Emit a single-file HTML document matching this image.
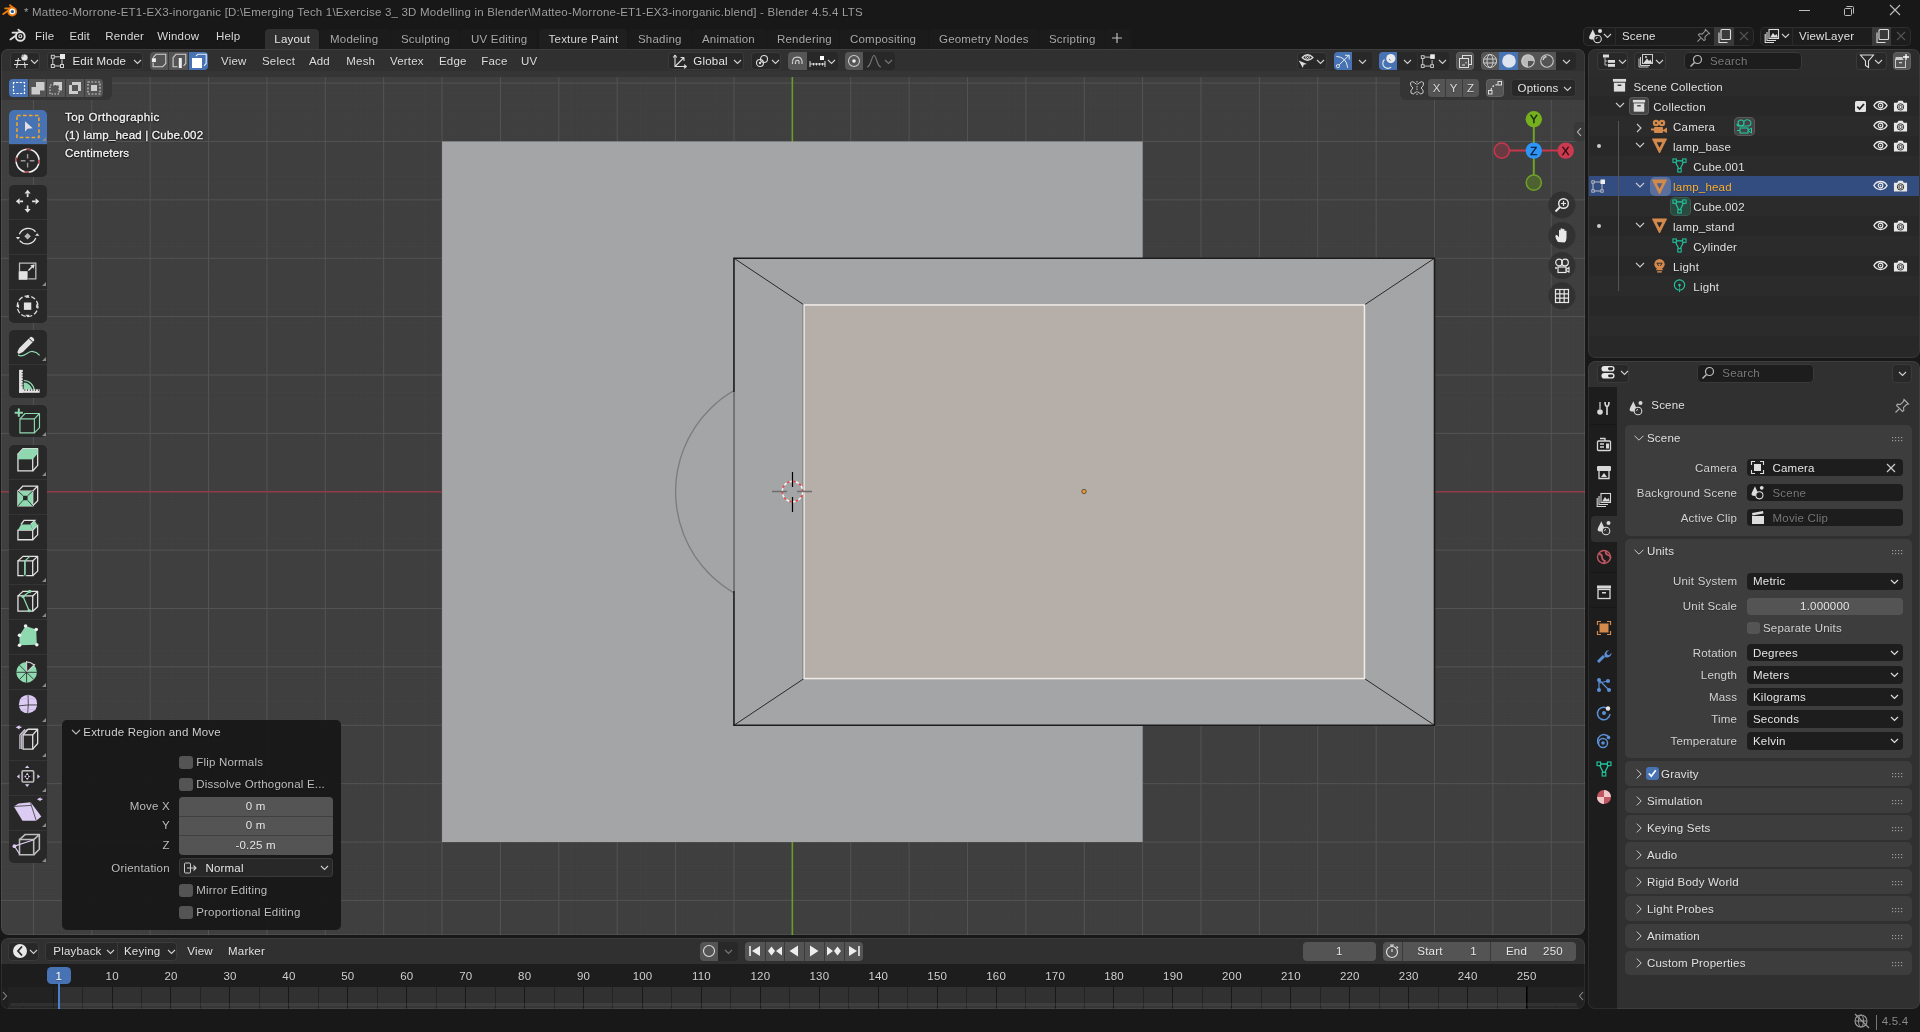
<!DOCTYPE html><html><head><meta charset="utf-8"><style>
html,body{margin:0;padding:0;width:1920px;height:1032px;overflow:hidden;background:#181818}
body{position:relative;font-family:"Liberation Sans",sans-serif}
div,span,svg{position:absolute;box-sizing:border-box}
svg{overflow:visible}
.t{white-space:pre;text-shadow:0 1px 1px rgba(0,0,0,0.28)}
#root{left:0;top:0;width:1920px;height:1032px;will-change:transform}
</style></head><body><div id="root">
<span class="t" style="left:24px;top:7px;font-size:11.5px;line-height:11.5px;color:#9e9e9e;letter-spacing:0.2px;">* Matteo-Morrone-ET1-EX3-inorganic [D:\Emerging Tech 1\Exercise 3_ 3D Modelling in Blender\Matteo-Morrone-ET1-EX3-inorganic.blend] - Blender 4.5.4 LTS</span>
<svg style="left:1799px;top:10px;" width="11" height="2" viewBox="0 0 11 2"><rect width="11" height="1" fill="#bdbdbd"/></svg>
<svg style="left:1843px;top:5px;" width="12" height="12" viewBox="0 0 12 12"><rect x="1.5" y="3.5" width="7" height="7" rx="1" fill="none" stroke="#bdbdbd"/><path d="M3.5 1.5h6a1 1 0 0 1 1 1v6" fill="none" stroke="#bdbdbd"/></svg>
<svg style="left:1889px;top:4px;" width="12" height="12" viewBox="0 0 12 12"><path d="M1 1L11 11M11 1L1 11" stroke="#bdbdbd" stroke-width="1.1"/></svg>
<span class="t" style="left:35px;top:31px;font-size:11.5px;line-height:11.5px;color:#d8d8d8;letter-spacing:0.2px;">File</span>
<span class="t" style="left:69.4px;top:31px;font-size:11.5px;line-height:11.5px;color:#d8d8d8;letter-spacing:0.2px;">Edit</span>
<span class="t" style="left:105.2px;top:31px;font-size:11.5px;line-height:11.5px;color:#d8d8d8;letter-spacing:0.2px;">Render</span>
<span class="t" style="left:157.2px;top:31px;font-size:11.5px;line-height:11.5px;color:#d8d8d8;letter-spacing:0.2px;">Window</span>
<span class="t" style="left:216px;top:31px;font-size:11.5px;line-height:11.5px;color:#d8d8d8;letter-spacing:0.2px;">Help</span>
<div style="left:265px;top:28.5px;width:54px;height:20px;background:#303030;border-radius:4px 4px 0 0;"></div>
<span class="t" style="left:274.3px;top:34px;font-size:11.5px;line-height:11.5px;color:#e6e6e6;letter-spacing:0.2px;">Layout</span>
<div style="left:320px;top:28.5px;width:70px;height:20px;background:#1b1b1b;border-radius:4px 4px 0 0;"></div>
<span class="t" style="left:330px;top:34px;font-size:11.5px;line-height:11.5px;color:#a8a8a8;letter-spacing:0.2px;">Modeling</span>
<div style="left:391px;top:28.5px;width:69px;height:20px;background:#1b1b1b;border-radius:4px 4px 0 0;"></div>
<span class="t" style="left:401px;top:34px;font-size:11.5px;line-height:11.5px;color:#a8a8a8;letter-spacing:0.2px;">Sculpting</span>
<div style="left:461px;top:28.5px;width:76px;height:20px;background:#1b1b1b;border-radius:4px 4px 0 0;"></div>
<span class="t" style="left:471px;top:34px;font-size:11.5px;line-height:11.5px;color:#a8a8a8;letter-spacing:0.2px;">UV Editing</span>
<div style="left:538.6px;top:28.5px;width:88.39999999999998px;height:20px;background:#1f1f1f;border-radius:4px 4px 0 0;"></div>
<span class="t" style="left:548.6px;top:34px;font-size:11.5px;line-height:11.5px;color:#d6d6d6;letter-spacing:0.2px;">Texture Paint</span>
<div style="left:628px;top:28.5px;width:63px;height:20px;background:#1b1b1b;border-radius:4px 4px 0 0;"></div>
<span class="t" style="left:638px;top:34px;font-size:11.5px;line-height:11.5px;color:#a8a8a8;letter-spacing:0.2px;">Shading</span>
<div style="left:692px;top:28.5px;width:74px;height:20px;background:#1b1b1b;border-radius:4px 4px 0 0;"></div>
<span class="t" style="left:702px;top:34px;font-size:11.5px;line-height:11.5px;color:#a8a8a8;letter-spacing:0.2px;">Animation</span>
<div style="left:767px;top:28.5px;width:72px;height:20px;background:#1b1b1b;border-radius:4px 4px 0 0;"></div>
<span class="t" style="left:777px;top:34px;font-size:11.5px;line-height:11.5px;color:#a8a8a8;letter-spacing:0.2px;">Rendering</span>
<div style="left:840px;top:28.5px;width:88px;height:20px;background:#1b1b1b;border-radius:4px 4px 0 0;"></div>
<span class="t" style="left:850px;top:34px;font-size:11.5px;line-height:11.5px;color:#a8a8a8;letter-spacing:0.2px;">Compositing</span>
<div style="left:929px;top:28.5px;width:109px;height:20px;background:#1b1b1b;border-radius:4px 4px 0 0;"></div>
<span class="t" style="left:939px;top:34px;font-size:11.5px;line-height:11.5px;color:#a8a8a8;letter-spacing:0.2px;">Geometry Nodes</span>
<div style="left:1039px;top:28.5px;width:66px;height:20px;background:#1b1b1b;border-radius:4px 4px 0 0;"></div>
<span class="t" style="left:1049px;top:34px;font-size:11.5px;line-height:11.5px;color:#a8a8a8;letter-spacing:0.2px;">Scripting</span>
<div style="left:1106px;top:28.5px;width:25px;height:20px;background:#1b1b1b;border-radius:4px 4px 0 0;"></div>
<svg style="left:1112px;top:33px;" width="10" height="10" viewBox="0 0 10 10"><path d="M5 0V10M0 5H10" stroke="#bdbdbd" stroke-width="1.2"/></svg>
<div style="left:1px;top:49px;width:1584px;height:886px;background:#3f3f3f;border-radius:8px;"></div>
<svg style="left:0;top:0" width="1920" height="1032"><clipPath id="vpc"><rect x="1" y="49" width="1584" height="886" rx="8"/></clipPath><g clip-path="url(#vpc)"><rect x="3.71" y="49" width="1" height="886" fill="#444444" fill-opacity="0.3"/><rect x="9.55" y="49" width="1" height="886" fill="#444444" fill-opacity="0.3"/><rect x="15.39" y="49" width="1" height="886" fill="#444444" fill-opacity="0.3"/><rect x="21.22" y="49" width="1" height="886" fill="#444444" fill-opacity="0.3"/><rect x="27.06" y="49" width="1" height="886" fill="#444444" fill-opacity="0.3"/><rect x="38.74" y="49" width="1" height="886" fill="#444444" fill-opacity="0.3"/><rect x="44.58" y="49" width="1" height="886" fill="#444444" fill-opacity="0.3"/><rect x="50.41" y="49" width="1" height="886" fill="#444444" fill-opacity="0.3"/><rect x="56.25" y="49" width="1" height="886" fill="#444444" fill-opacity="0.3"/><rect x="62.09" y="49" width="1" height="886" fill="#444444" fill-opacity="0.3"/><rect x="67.93" y="49" width="1" height="886" fill="#444444" fill-opacity="0.3"/><rect x="73.77" y="49" width="1" height="886" fill="#444444" fill-opacity="0.3"/><rect x="79.60" y="49" width="1" height="886" fill="#444444" fill-opacity="0.3"/><rect x="85.44" y="49" width="1" height="886" fill="#444444" fill-opacity="0.3"/><rect x="97.12" y="49" width="1" height="886" fill="#444444" fill-opacity="0.3"/><rect x="102.96" y="49" width="1" height="886" fill="#444444" fill-opacity="0.3"/><rect x="108.79" y="49" width="1" height="886" fill="#444444" fill-opacity="0.3"/><rect x="114.63" y="49" width="1" height="886" fill="#444444" fill-opacity="0.3"/><rect x="120.47" y="49" width="1" height="886" fill="#444444" fill-opacity="0.3"/><rect x="126.31" y="49" width="1" height="886" fill="#444444" fill-opacity="0.3"/><rect x="132.15" y="49" width="1" height="886" fill="#444444" fill-opacity="0.3"/><rect x="137.98" y="49" width="1" height="886" fill="#444444" fill-opacity="0.3"/><rect x="143.82" y="49" width="1" height="886" fill="#444444" fill-opacity="0.3"/><rect x="155.50" y="49" width="1" height="886" fill="#444444" fill-opacity="0.3"/><rect x="161.34" y="49" width="1" height="886" fill="#444444" fill-opacity="0.3"/><rect x="167.17" y="49" width="1" height="886" fill="#444444" fill-opacity="0.3"/><rect x="173.01" y="49" width="1" height="886" fill="#444444" fill-opacity="0.3"/><rect x="178.85" y="49" width="1" height="886" fill="#444444" fill-opacity="0.3"/><rect x="184.69" y="49" width="1" height="886" fill="#444444" fill-opacity="0.3"/><rect x="190.53" y="49" width="1" height="886" fill="#444444" fill-opacity="0.3"/><rect x="196.36" y="49" width="1" height="886" fill="#444444" fill-opacity="0.3"/><rect x="202.20" y="49" width="1" height="886" fill="#444444" fill-opacity="0.3"/><rect x="213.88" y="49" width="1" height="886" fill="#444444" fill-opacity="0.3"/><rect x="219.72" y="49" width="1" height="886" fill="#444444" fill-opacity="0.3"/><rect x="225.55" y="49" width="1" height="886" fill="#444444" fill-opacity="0.3"/><rect x="231.39" y="49" width="1" height="886" fill="#444444" fill-opacity="0.3"/><rect x="237.23" y="49" width="1" height="886" fill="#444444" fill-opacity="0.3"/><rect x="243.07" y="49" width="1" height="886" fill="#444444" fill-opacity="0.3"/><rect x="248.91" y="49" width="1" height="886" fill="#444444" fill-opacity="0.3"/><rect x="254.74" y="49" width="1" height="886" fill="#444444" fill-opacity="0.3"/><rect x="260.58" y="49" width="1" height="886" fill="#444444" fill-opacity="0.3"/><rect x="272.26" y="49" width="1" height="886" fill="#444444" fill-opacity="0.3"/><rect x="278.10" y="49" width="1" height="886" fill="#444444" fill-opacity="0.3"/><rect x="283.93" y="49" width="1" height="886" fill="#444444" fill-opacity="0.3"/><rect x="289.77" y="49" width="1" height="886" fill="#444444" fill-opacity="0.3"/><rect x="295.61" y="49" width="1" height="886" fill="#444444" fill-opacity="0.3"/><rect x="301.45" y="49" width="1" height="886" fill="#444444" fill-opacity="0.3"/><rect x="307.29" y="49" width="1" height="886" fill="#444444" fill-opacity="0.3"/><rect x="313.12" y="49" width="1" height="886" fill="#444444" fill-opacity="0.3"/><rect x="318.96" y="49" width="1" height="886" fill="#444444" fill-opacity="0.3"/><rect x="330.64" y="49" width="1" height="886" fill="#444444" fill-opacity="0.3"/><rect x="336.48" y="49" width="1" height="886" fill="#444444" fill-opacity="0.3"/><rect x="342.31" y="49" width="1" height="886" fill="#444444" fill-opacity="0.3"/><rect x="348.15" y="49" width="1" height="886" fill="#444444" fill-opacity="0.3"/><rect x="353.99" y="49" width="1" height="886" fill="#444444" fill-opacity="0.3"/><rect x="359.83" y="49" width="1" height="886" fill="#444444" fill-opacity="0.3"/><rect x="365.67" y="49" width="1" height="886" fill="#444444" fill-opacity="0.3"/><rect x="371.50" y="49" width="1" height="886" fill="#444444" fill-opacity="0.3"/><rect x="377.34" y="49" width="1" height="886" fill="#444444" fill-opacity="0.3"/><rect x="389.02" y="49" width="1" height="886" fill="#444444" fill-opacity="0.3"/><rect x="394.86" y="49" width="1" height="886" fill="#444444" fill-opacity="0.3"/><rect x="400.69" y="49" width="1" height="886" fill="#444444" fill-opacity="0.3"/><rect x="406.53" y="49" width="1" height="886" fill="#444444" fill-opacity="0.3"/><rect x="412.37" y="49" width="1" height="886" fill="#444444" fill-opacity="0.3"/><rect x="418.21" y="49" width="1" height="886" fill="#444444" fill-opacity="0.3"/><rect x="424.05" y="49" width="1" height="886" fill="#444444" fill-opacity="0.3"/><rect x="429.88" y="49" width="1" height="886" fill="#444444" fill-opacity="0.3"/><rect x="435.72" y="49" width="1" height="886" fill="#444444" fill-opacity="0.3"/><rect x="447.40" y="49" width="1" height="886" fill="#444444" fill-opacity="0.3"/><rect x="453.24" y="49" width="1" height="886" fill="#444444" fill-opacity="0.3"/><rect x="459.07" y="49" width="1" height="886" fill="#444444" fill-opacity="0.3"/><rect x="464.91" y="49" width="1" height="886" fill="#444444" fill-opacity="0.3"/><rect x="470.75" y="49" width="1" height="886" fill="#444444" fill-opacity="0.3"/><rect x="476.59" y="49" width="1" height="886" fill="#444444" fill-opacity="0.3"/><rect x="482.43" y="49" width="1" height="886" fill="#444444" fill-opacity="0.3"/><rect x="488.26" y="49" width="1" height="886" fill="#444444" fill-opacity="0.3"/><rect x="494.10" y="49" width="1" height="886" fill="#444444" fill-opacity="0.3"/><rect x="505.78" y="49" width="1" height="886" fill="#444444" fill-opacity="0.3"/><rect x="511.62" y="49" width="1" height="886" fill="#444444" fill-opacity="0.3"/><rect x="517.45" y="49" width="1" height="886" fill="#444444" fill-opacity="0.3"/><rect x="523.29" y="49" width="1" height="886" fill="#444444" fill-opacity="0.3"/><rect x="529.13" y="49" width="1" height="886" fill="#444444" fill-opacity="0.3"/><rect x="534.97" y="49" width="1" height="886" fill="#444444" fill-opacity="0.3"/><rect x="540.81" y="49" width="1" height="886" fill="#444444" fill-opacity="0.3"/><rect x="546.64" y="49" width="1" height="886" fill="#444444" fill-opacity="0.3"/><rect x="552.48" y="49" width="1" height="886" fill="#444444" fill-opacity="0.3"/><rect x="564.16" y="49" width="1" height="886" fill="#444444" fill-opacity="0.3"/><rect x="570.00" y="49" width="1" height="886" fill="#444444" fill-opacity="0.3"/><rect x="575.83" y="49" width="1" height="886" fill="#444444" fill-opacity="0.3"/><rect x="581.67" y="49" width="1" height="886" fill="#444444" fill-opacity="0.3"/><rect x="587.51" y="49" width="1" height="886" fill="#444444" fill-opacity="0.3"/><rect x="593.35" y="49" width="1" height="886" fill="#444444" fill-opacity="0.3"/><rect x="599.19" y="49" width="1" height="886" fill="#444444" fill-opacity="0.3"/><rect x="605.02" y="49" width="1" height="886" fill="#444444" fill-opacity="0.3"/><rect x="610.86" y="49" width="1" height="886" fill="#444444" fill-opacity="0.3"/><rect x="622.54" y="49" width="1" height="886" fill="#444444" fill-opacity="0.3"/><rect x="628.38" y="49" width="1" height="886" fill="#444444" fill-opacity="0.3"/><rect x="634.21" y="49" width="1" height="886" fill="#444444" fill-opacity="0.3"/><rect x="640.05" y="49" width="1" height="886" fill="#444444" fill-opacity="0.3"/><rect x="645.89" y="49" width="1" height="886" fill="#444444" fill-opacity="0.3"/><rect x="651.73" y="49" width="1" height="886" fill="#444444" fill-opacity="0.3"/><rect x="657.57" y="49" width="1" height="886" fill="#444444" fill-opacity="0.3"/><rect x="663.40" y="49" width="1" height="886" fill="#444444" fill-opacity="0.3"/><rect x="669.24" y="49" width="1" height="886" fill="#444444" fill-opacity="0.3"/><rect x="680.92" y="49" width="1" height="886" fill="#444444" fill-opacity="0.3"/><rect x="686.76" y="49" width="1" height="886" fill="#444444" fill-opacity="0.3"/><rect x="692.59" y="49" width="1" height="886" fill="#444444" fill-opacity="0.3"/><rect x="698.43" y="49" width="1" height="886" fill="#444444" fill-opacity="0.3"/><rect x="704.27" y="49" width="1" height="886" fill="#444444" fill-opacity="0.3"/><rect x="710.11" y="49" width="1" height="886" fill="#444444" fill-opacity="0.3"/><rect x="715.95" y="49" width="1" height="886" fill="#444444" fill-opacity="0.3"/><rect x="721.78" y="49" width="1" height="886" fill="#444444" fill-opacity="0.3"/><rect x="727.62" y="49" width="1" height="886" fill="#444444" fill-opacity="0.3"/><rect x="739.30" y="49" width="1" height="886" fill="#444444" fill-opacity="0.3"/><rect x="745.14" y="49" width="1" height="886" fill="#444444" fill-opacity="0.3"/><rect x="750.97" y="49" width="1" height="886" fill="#444444" fill-opacity="0.3"/><rect x="756.81" y="49" width="1" height="886" fill="#444444" fill-opacity="0.3"/><rect x="762.65" y="49" width="1" height="886" fill="#444444" fill-opacity="0.3"/><rect x="768.49" y="49" width="1" height="886" fill="#444444" fill-opacity="0.3"/><rect x="774.33" y="49" width="1" height="886" fill="#444444" fill-opacity="0.3"/><rect x="780.16" y="49" width="1" height="886" fill="#444444" fill-opacity="0.3"/><rect x="786.00" y="49" width="1" height="886" fill="#444444" fill-opacity="0.3"/><rect x="797.68" y="49" width="1" height="886" fill="#444444" fill-opacity="0.3"/><rect x="803.52" y="49" width="1" height="886" fill="#444444" fill-opacity="0.3"/><rect x="809.35" y="49" width="1" height="886" fill="#444444" fill-opacity="0.3"/><rect x="815.19" y="49" width="1" height="886" fill="#444444" fill-opacity="0.3"/><rect x="821.03" y="49" width="1" height="886" fill="#444444" fill-opacity="0.3"/><rect x="826.87" y="49" width="1" height="886" fill="#444444" fill-opacity="0.3"/><rect x="832.71" y="49" width="1" height="886" fill="#444444" fill-opacity="0.3"/><rect x="838.54" y="49" width="1" height="886" fill="#444444" fill-opacity="0.3"/><rect x="844.38" y="49" width="1" height="886" fill="#444444" fill-opacity="0.3"/><rect x="856.06" y="49" width="1" height="886" fill="#444444" fill-opacity="0.3"/><rect x="861.90" y="49" width="1" height="886" fill="#444444" fill-opacity="0.3"/><rect x="867.73" y="49" width="1" height="886" fill="#444444" fill-opacity="0.3"/><rect x="873.57" y="49" width="1" height="886" fill="#444444" fill-opacity="0.3"/><rect x="879.41" y="49" width="1" height="886" fill="#444444" fill-opacity="0.3"/><rect x="885.25" y="49" width="1" height="886" fill="#444444" fill-opacity="0.3"/><rect x="891.09" y="49" width="1" height="886" fill="#444444" fill-opacity="0.3"/><rect x="896.92" y="49" width="1" height="886" fill="#444444" fill-opacity="0.3"/><rect x="902.76" y="49" width="1" height="886" fill="#444444" fill-opacity="0.3"/><rect x="914.44" y="49" width="1" height="886" fill="#444444" fill-opacity="0.3"/><rect x="920.28" y="49" width="1" height="886" fill="#444444" fill-opacity="0.3"/><rect x="926.11" y="49" width="1" height="886" fill="#444444" fill-opacity="0.3"/><rect x="931.95" y="49" width="1" height="886" fill="#444444" fill-opacity="0.3"/><rect x="937.79" y="49" width="1" height="886" fill="#444444" fill-opacity="0.3"/><rect x="943.63" y="49" width="1" height="886" fill="#444444" fill-opacity="0.3"/><rect x="949.47" y="49" width="1" height="886" fill="#444444" fill-opacity="0.3"/><rect x="955.30" y="49" width="1" height="886" fill="#444444" fill-opacity="0.3"/><rect x="961.14" y="49" width="1" height="886" fill="#444444" fill-opacity="0.3"/><rect x="972.82" y="49" width="1" height="886" fill="#444444" fill-opacity="0.3"/><rect x="978.66" y="49" width="1" height="886" fill="#444444" fill-opacity="0.3"/><rect x="984.49" y="49" width="1" height="886" fill="#444444" fill-opacity="0.3"/><rect x="990.33" y="49" width="1" height="886" fill="#444444" fill-opacity="0.3"/><rect x="996.17" y="49" width="1" height="886" fill="#444444" fill-opacity="0.3"/><rect x="1002.01" y="49" width="1" height="886" fill="#444444" fill-opacity="0.3"/><rect x="1007.85" y="49" width="1" height="886" fill="#444444" fill-opacity="0.3"/><rect x="1013.68" y="49" width="1" height="886" fill="#444444" fill-opacity="0.3"/><rect x="1019.52" y="49" width="1" height="886" fill="#444444" fill-opacity="0.3"/><rect x="1031.20" y="49" width="1" height="886" fill="#444444" fill-opacity="0.3"/><rect x="1037.04" y="49" width="1" height="886" fill="#444444" fill-opacity="0.3"/><rect x="1042.87" y="49" width="1" height="886" fill="#444444" fill-opacity="0.3"/><rect x="1048.71" y="49" width="1" height="886" fill="#444444" fill-opacity="0.3"/><rect x="1054.55" y="49" width="1" height="886" fill="#444444" fill-opacity="0.3"/><rect x="1060.39" y="49" width="1" height="886" fill="#444444" fill-opacity="0.3"/><rect x="1066.23" y="49" width="1" height="886" fill="#444444" fill-opacity="0.3"/><rect x="1072.06" y="49" width="1" height="886" fill="#444444" fill-opacity="0.3"/><rect x="1077.90" y="49" width="1" height="886" fill="#444444" fill-opacity="0.3"/><rect x="1089.58" y="49" width="1" height="886" fill="#444444" fill-opacity="0.3"/><rect x="1095.42" y="49" width="1" height="886" fill="#444444" fill-opacity="0.3"/><rect x="1101.25" y="49" width="1" height="886" fill="#444444" fill-opacity="0.3"/><rect x="1107.09" y="49" width="1" height="886" fill="#444444" fill-opacity="0.3"/><rect x="1112.93" y="49" width="1" height="886" fill="#444444" fill-opacity="0.3"/><rect x="1118.77" y="49" width="1" height="886" fill="#444444" fill-opacity="0.3"/><rect x="1124.61" y="49" width="1" height="886" fill="#444444" fill-opacity="0.3"/><rect x="1130.44" y="49" width="1" height="886" fill="#444444" fill-opacity="0.3"/><rect x="1136.28" y="49" width="1" height="886" fill="#444444" fill-opacity="0.3"/><rect x="1147.96" y="49" width="1" height="886" fill="#444444" fill-opacity="0.3"/><rect x="1153.80" y="49" width="1" height="886" fill="#444444" fill-opacity="0.3"/><rect x="1159.63" y="49" width="1" height="886" fill="#444444" fill-opacity="0.3"/><rect x="1165.47" y="49" width="1" height="886" fill="#444444" fill-opacity="0.3"/><rect x="1171.31" y="49" width="1" height="886" fill="#444444" fill-opacity="0.3"/><rect x="1177.15" y="49" width="1" height="886" fill="#444444" fill-opacity="0.3"/><rect x="1182.99" y="49" width="1" height="886" fill="#444444" fill-opacity="0.3"/><rect x="1188.82" y="49" width="1" height="886" fill="#444444" fill-opacity="0.3"/><rect x="1194.66" y="49" width="1" height="886" fill="#444444" fill-opacity="0.3"/><rect x="1206.34" y="49" width="1" height="886" fill="#444444" fill-opacity="0.3"/><rect x="1212.18" y="49" width="1" height="886" fill="#444444" fill-opacity="0.3"/><rect x="1218.01" y="49" width="1" height="886" fill="#444444" fill-opacity="0.3"/><rect x="1223.85" y="49" width="1" height="886" fill="#444444" fill-opacity="0.3"/><rect x="1229.69" y="49" width="1" height="886" fill="#444444" fill-opacity="0.3"/><rect x="1235.53" y="49" width="1" height="886" fill="#444444" fill-opacity="0.3"/><rect x="1241.37" y="49" width="1" height="886" fill="#444444" fill-opacity="0.3"/><rect x="1247.20" y="49" width="1" height="886" fill="#444444" fill-opacity="0.3"/><rect x="1253.04" y="49" width="1" height="886" fill="#444444" fill-opacity="0.3"/><rect x="1264.72" y="49" width="1" height="886" fill="#444444" fill-opacity="0.3"/><rect x="1270.56" y="49" width="1" height="886" fill="#444444" fill-opacity="0.3"/><rect x="1276.39" y="49" width="1" height="886" fill="#444444" fill-opacity="0.3"/><rect x="1282.23" y="49" width="1" height="886" fill="#444444" fill-opacity="0.3"/><rect x="1288.07" y="49" width="1" height="886" fill="#444444" fill-opacity="0.3"/><rect x="1293.91" y="49" width="1" height="886" fill="#444444" fill-opacity="0.3"/><rect x="1299.75" y="49" width="1" height="886" fill="#444444" fill-opacity="0.3"/><rect x="1305.58" y="49" width="1" height="886" fill="#444444" fill-opacity="0.3"/><rect x="1311.42" y="49" width="1" height="886" fill="#444444" fill-opacity="0.3"/><rect x="1323.10" y="49" width="1" height="886" fill="#444444" fill-opacity="0.3"/><rect x="1328.94" y="49" width="1" height="886" fill="#444444" fill-opacity="0.3"/><rect x="1334.77" y="49" width="1" height="886" fill="#444444" fill-opacity="0.3"/><rect x="1340.61" y="49" width="1" height="886" fill="#444444" fill-opacity="0.3"/><rect x="1346.45" y="49" width="1" height="886" fill="#444444" fill-opacity="0.3"/><rect x="1352.29" y="49" width="1" height="886" fill="#444444" fill-opacity="0.3"/><rect x="1358.13" y="49" width="1" height="886" fill="#444444" fill-opacity="0.3"/><rect x="1363.96" y="49" width="1" height="886" fill="#444444" fill-opacity="0.3"/><rect x="1369.80" y="49" width="1" height="886" fill="#444444" fill-opacity="0.3"/><rect x="1381.48" y="49" width="1" height="886" fill="#444444" fill-opacity="0.3"/><rect x="1387.32" y="49" width="1" height="886" fill="#444444" fill-opacity="0.3"/><rect x="1393.15" y="49" width="1" height="886" fill="#444444" fill-opacity="0.3"/><rect x="1398.99" y="49" width="1" height="886" fill="#444444" fill-opacity="0.3"/><rect x="1404.83" y="49" width="1" height="886" fill="#444444" fill-opacity="0.3"/><rect x="1410.67" y="49" width="1" height="886" fill="#444444" fill-opacity="0.3"/><rect x="1416.51" y="49" width="1" height="886" fill="#444444" fill-opacity="0.3"/><rect x="1422.34" y="49" width="1" height="886" fill="#444444" fill-opacity="0.3"/><rect x="1428.18" y="49" width="1" height="886" fill="#444444" fill-opacity="0.3"/><rect x="1439.86" y="49" width="1" height="886" fill="#444444" fill-opacity="0.3"/><rect x="1445.70" y="49" width="1" height="886" fill="#444444" fill-opacity="0.3"/><rect x="1451.53" y="49" width="1" height="886" fill="#444444" fill-opacity="0.3"/><rect x="1457.37" y="49" width="1" height="886" fill="#444444" fill-opacity="0.3"/><rect x="1463.21" y="49" width="1" height="886" fill="#444444" fill-opacity="0.3"/><rect x="1469.05" y="49" width="1" height="886" fill="#444444" fill-opacity="0.3"/><rect x="1474.89" y="49" width="1" height="886" fill="#444444" fill-opacity="0.3"/><rect x="1480.72" y="49" width="1" height="886" fill="#444444" fill-opacity="0.3"/><rect x="1486.56" y="49" width="1" height="886" fill="#444444" fill-opacity="0.3"/><rect x="1498.24" y="49" width="1" height="886" fill="#444444" fill-opacity="0.3"/><rect x="1504.08" y="49" width="1" height="886" fill="#444444" fill-opacity="0.3"/><rect x="1509.91" y="49" width="1" height="886" fill="#444444" fill-opacity="0.3"/><rect x="1515.75" y="49" width="1" height="886" fill="#444444" fill-opacity="0.3"/><rect x="1521.59" y="49" width="1" height="886" fill="#444444" fill-opacity="0.3"/><rect x="1527.43" y="49" width="1" height="886" fill="#444444" fill-opacity="0.3"/><rect x="1533.27" y="49" width="1" height="886" fill="#444444" fill-opacity="0.3"/><rect x="1539.10" y="49" width="1" height="886" fill="#444444" fill-opacity="0.3"/><rect x="1544.94" y="49" width="1" height="886" fill="#444444" fill-opacity="0.3"/><rect x="1556.62" y="49" width="1" height="886" fill="#444444" fill-opacity="0.3"/><rect x="1562.46" y="49" width="1" height="886" fill="#444444" fill-opacity="0.3"/><rect x="1568.29" y="49" width="1" height="886" fill="#444444" fill-opacity="0.3"/><rect x="1574.13" y="49" width="1" height="886" fill="#444444" fill-opacity="0.3"/><rect x="1579.97" y="49" width="1" height="886" fill="#444444" fill-opacity="0.3"/><rect x="1" y="53.40" width="1584" height="1" fill="#444444" fill-opacity="0.3"/><rect x="1" y="59.24" width="1584" height="1" fill="#444444" fill-opacity="0.3"/><rect x="1" y="65.08" width="1584" height="1" fill="#444444" fill-opacity="0.3"/><rect x="1" y="70.91" width="1584" height="1" fill="#444444" fill-opacity="0.3"/><rect x="1" y="76.75" width="1584" height="1" fill="#444444" fill-opacity="0.3"/><rect x="1" y="88.43" width="1584" height="1" fill="#444444" fill-opacity="0.3"/><rect x="1" y="94.27" width="1584" height="1" fill="#444444" fill-opacity="0.3"/><rect x="1" y="100.10" width="1584" height="1" fill="#444444" fill-opacity="0.3"/><rect x="1" y="105.94" width="1584" height="1" fill="#444444" fill-opacity="0.3"/><rect x="1" y="111.78" width="1584" height="1" fill="#444444" fill-opacity="0.3"/><rect x="1" y="117.62" width="1584" height="1" fill="#444444" fill-opacity="0.3"/><rect x="1" y="123.46" width="1584" height="1" fill="#444444" fill-opacity="0.3"/><rect x="1" y="129.29" width="1584" height="1" fill="#444444" fill-opacity="0.3"/><rect x="1" y="135.13" width="1584" height="1" fill="#444444" fill-opacity="0.3"/><rect x="1" y="146.81" width="1584" height="1" fill="#444444" fill-opacity="0.3"/><rect x="1" y="152.65" width="1584" height="1" fill="#444444" fill-opacity="0.3"/><rect x="1" y="158.48" width="1584" height="1" fill="#444444" fill-opacity="0.3"/><rect x="1" y="164.32" width="1584" height="1" fill="#444444" fill-opacity="0.3"/><rect x="1" y="170.16" width="1584" height="1" fill="#444444" fill-opacity="0.3"/><rect x="1" y="176.00" width="1584" height="1" fill="#444444" fill-opacity="0.3"/><rect x="1" y="181.84" width="1584" height="1" fill="#444444" fill-opacity="0.3"/><rect x="1" y="187.67" width="1584" height="1" fill="#444444" fill-opacity="0.3"/><rect x="1" y="193.51" width="1584" height="1" fill="#444444" fill-opacity="0.3"/><rect x="1" y="205.19" width="1584" height="1" fill="#444444" fill-opacity="0.3"/><rect x="1" y="211.03" width="1584" height="1" fill="#444444" fill-opacity="0.3"/><rect x="1" y="216.86" width="1584" height="1" fill="#444444" fill-opacity="0.3"/><rect x="1" y="222.70" width="1584" height="1" fill="#444444" fill-opacity="0.3"/><rect x="1" y="228.54" width="1584" height="1" fill="#444444" fill-opacity="0.3"/><rect x="1" y="234.38" width="1584" height="1" fill="#444444" fill-opacity="0.3"/><rect x="1" y="240.22" width="1584" height="1" fill="#444444" fill-opacity="0.3"/><rect x="1" y="246.05" width="1584" height="1" fill="#444444" fill-opacity="0.3"/><rect x="1" y="251.89" width="1584" height="1" fill="#444444" fill-opacity="0.3"/><rect x="1" y="263.57" width="1584" height="1" fill="#444444" fill-opacity="0.3"/><rect x="1" y="269.41" width="1584" height="1" fill="#444444" fill-opacity="0.3"/><rect x="1" y="275.24" width="1584" height="1" fill="#444444" fill-opacity="0.3"/><rect x="1" y="281.08" width="1584" height="1" fill="#444444" fill-opacity="0.3"/><rect x="1" y="286.92" width="1584" height="1" fill="#444444" fill-opacity="0.3"/><rect x="1" y="292.76" width="1584" height="1" fill="#444444" fill-opacity="0.3"/><rect x="1" y="298.60" width="1584" height="1" fill="#444444" fill-opacity="0.3"/><rect x="1" y="304.43" width="1584" height="1" fill="#444444" fill-opacity="0.3"/><rect x="1" y="310.27" width="1584" height="1" fill="#444444" fill-opacity="0.3"/><rect x="1" y="321.95" width="1584" height="1" fill="#444444" fill-opacity="0.3"/><rect x="1" y="327.79" width="1584" height="1" fill="#444444" fill-opacity="0.3"/><rect x="1" y="333.62" width="1584" height="1" fill="#444444" fill-opacity="0.3"/><rect x="1" y="339.46" width="1584" height="1" fill="#444444" fill-opacity="0.3"/><rect x="1" y="345.30" width="1584" height="1" fill="#444444" fill-opacity="0.3"/><rect x="1" y="351.14" width="1584" height="1" fill="#444444" fill-opacity="0.3"/><rect x="1" y="356.98" width="1584" height="1" fill="#444444" fill-opacity="0.3"/><rect x="1" y="362.81" width="1584" height="1" fill="#444444" fill-opacity="0.3"/><rect x="1" y="368.65" width="1584" height="1" fill="#444444" fill-opacity="0.3"/><rect x="1" y="380.33" width="1584" height="1" fill="#444444" fill-opacity="0.3"/><rect x="1" y="386.17" width="1584" height="1" fill="#444444" fill-opacity="0.3"/><rect x="1" y="392.00" width="1584" height="1" fill="#444444" fill-opacity="0.3"/><rect x="1" y="397.84" width="1584" height="1" fill="#444444" fill-opacity="0.3"/><rect x="1" y="403.68" width="1584" height="1" fill="#444444" fill-opacity="0.3"/><rect x="1" y="409.52" width="1584" height="1" fill="#444444" fill-opacity="0.3"/><rect x="1" y="415.36" width="1584" height="1" fill="#444444" fill-opacity="0.3"/><rect x="1" y="421.19" width="1584" height="1" fill="#444444" fill-opacity="0.3"/><rect x="1" y="427.03" width="1584" height="1" fill="#444444" fill-opacity="0.3"/><rect x="1" y="438.71" width="1584" height="1" fill="#444444" fill-opacity="0.3"/><rect x="1" y="444.55" width="1584" height="1" fill="#444444" fill-opacity="0.3"/><rect x="1" y="450.38" width="1584" height="1" fill="#444444" fill-opacity="0.3"/><rect x="1" y="456.22" width="1584" height="1" fill="#444444" fill-opacity="0.3"/><rect x="1" y="462.06" width="1584" height="1" fill="#444444" fill-opacity="0.3"/><rect x="1" y="467.90" width="1584" height="1" fill="#444444" fill-opacity="0.3"/><rect x="1" y="473.74" width="1584" height="1" fill="#444444" fill-opacity="0.3"/><rect x="1" y="479.57" width="1584" height="1" fill="#444444" fill-opacity="0.3"/><rect x="1" y="485.41" width="1584" height="1" fill="#444444" fill-opacity="0.3"/><rect x="1" y="497.09" width="1584" height="1" fill="#444444" fill-opacity="0.3"/><rect x="1" y="502.93" width="1584" height="1" fill="#444444" fill-opacity="0.3"/><rect x="1" y="508.76" width="1584" height="1" fill="#444444" fill-opacity="0.3"/><rect x="1" y="514.60" width="1584" height="1" fill="#444444" fill-opacity="0.3"/><rect x="1" y="520.44" width="1584" height="1" fill="#444444" fill-opacity="0.3"/><rect x="1" y="526.28" width="1584" height="1" fill="#444444" fill-opacity="0.3"/><rect x="1" y="532.12" width="1584" height="1" fill="#444444" fill-opacity="0.3"/><rect x="1" y="537.95" width="1584" height="1" fill="#444444" fill-opacity="0.3"/><rect x="1" y="543.79" width="1584" height="1" fill="#444444" fill-opacity="0.3"/><rect x="1" y="555.47" width="1584" height="1" fill="#444444" fill-opacity="0.3"/><rect x="1" y="561.31" width="1584" height="1" fill="#444444" fill-opacity="0.3"/><rect x="1" y="567.14" width="1584" height="1" fill="#444444" fill-opacity="0.3"/><rect x="1" y="572.98" width="1584" height="1" fill="#444444" fill-opacity="0.3"/><rect x="1" y="578.82" width="1584" height="1" fill="#444444" fill-opacity="0.3"/><rect x="1" y="584.66" width="1584" height="1" fill="#444444" fill-opacity="0.3"/><rect x="1" y="590.50" width="1584" height="1" fill="#444444" fill-opacity="0.3"/><rect x="1" y="596.33" width="1584" height="1" fill="#444444" fill-opacity="0.3"/><rect x="1" y="602.17" width="1584" height="1" fill="#444444" fill-opacity="0.3"/><rect x="1" y="613.85" width="1584" height="1" fill="#444444" fill-opacity="0.3"/><rect x="1" y="619.69" width="1584" height="1" fill="#444444" fill-opacity="0.3"/><rect x="1" y="625.52" width="1584" height="1" fill="#444444" fill-opacity="0.3"/><rect x="1" y="631.36" width="1584" height="1" fill="#444444" fill-opacity="0.3"/><rect x="1" y="637.20" width="1584" height="1" fill="#444444" fill-opacity="0.3"/><rect x="1" y="643.04" width="1584" height="1" fill="#444444" fill-opacity="0.3"/><rect x="1" y="648.88" width="1584" height="1" fill="#444444" fill-opacity="0.3"/><rect x="1" y="654.71" width="1584" height="1" fill="#444444" fill-opacity="0.3"/><rect x="1" y="660.55" width="1584" height="1" fill="#444444" fill-opacity="0.3"/><rect x="1" y="672.23" width="1584" height="1" fill="#444444" fill-opacity="0.3"/><rect x="1" y="678.07" width="1584" height="1" fill="#444444" fill-opacity="0.3"/><rect x="1" y="683.90" width="1584" height="1" fill="#444444" fill-opacity="0.3"/><rect x="1" y="689.74" width="1584" height="1" fill="#444444" fill-opacity="0.3"/><rect x="1" y="695.58" width="1584" height="1" fill="#444444" fill-opacity="0.3"/><rect x="1" y="701.42" width="1584" height="1" fill="#444444" fill-opacity="0.3"/><rect x="1" y="707.26" width="1584" height="1" fill="#444444" fill-opacity="0.3"/><rect x="1" y="713.09" width="1584" height="1" fill="#444444" fill-opacity="0.3"/><rect x="1" y="718.93" width="1584" height="1" fill="#444444" fill-opacity="0.3"/><rect x="1" y="730.61" width="1584" height="1" fill="#444444" fill-opacity="0.3"/><rect x="1" y="736.45" width="1584" height="1" fill="#444444" fill-opacity="0.3"/><rect x="1" y="742.28" width="1584" height="1" fill="#444444" fill-opacity="0.3"/><rect x="1" y="748.12" width="1584" height="1" fill="#444444" fill-opacity="0.3"/><rect x="1" y="753.96" width="1584" height="1" fill="#444444" fill-opacity="0.3"/><rect x="1" y="759.80" width="1584" height="1" fill="#444444" fill-opacity="0.3"/><rect x="1" y="765.64" width="1584" height="1" fill="#444444" fill-opacity="0.3"/><rect x="1" y="771.47" width="1584" height="1" fill="#444444" fill-opacity="0.3"/><rect x="1" y="777.31" width="1584" height="1" fill="#444444" fill-opacity="0.3"/><rect x="1" y="788.99" width="1584" height="1" fill="#444444" fill-opacity="0.3"/><rect x="1" y="794.83" width="1584" height="1" fill="#444444" fill-opacity="0.3"/><rect x="1" y="800.66" width="1584" height="1" fill="#444444" fill-opacity="0.3"/><rect x="1" y="806.50" width="1584" height="1" fill="#444444" fill-opacity="0.3"/><rect x="1" y="812.34" width="1584" height="1" fill="#444444" fill-opacity="0.3"/><rect x="1" y="818.18" width="1584" height="1" fill="#444444" fill-opacity="0.3"/><rect x="1" y="824.02" width="1584" height="1" fill="#444444" fill-opacity="0.3"/><rect x="1" y="829.85" width="1584" height="1" fill="#444444" fill-opacity="0.3"/><rect x="1" y="835.69" width="1584" height="1" fill="#444444" fill-opacity="0.3"/><rect x="1" y="847.37" width="1584" height="1" fill="#444444" fill-opacity="0.3"/><rect x="1" y="853.21" width="1584" height="1" fill="#444444" fill-opacity="0.3"/><rect x="1" y="859.04" width="1584" height="1" fill="#444444" fill-opacity="0.3"/><rect x="1" y="864.88" width="1584" height="1" fill="#444444" fill-opacity="0.3"/><rect x="1" y="870.72" width="1584" height="1" fill="#444444" fill-opacity="0.3"/><rect x="1" y="876.56" width="1584" height="1" fill="#444444" fill-opacity="0.3"/><rect x="1" y="882.40" width="1584" height="1" fill="#444444" fill-opacity="0.3"/><rect x="1" y="888.23" width="1584" height="1" fill="#444444" fill-opacity="0.3"/><rect x="1" y="894.07" width="1584" height="1" fill="#444444" fill-opacity="0.3"/><rect x="1" y="905.75" width="1584" height="1" fill="#444444" fill-opacity="0.3"/><rect x="1" y="911.59" width="1584" height="1" fill="#444444" fill-opacity="0.3"/><rect x="1" y="917.42" width="1584" height="1" fill="#444444" fill-opacity="0.3"/><rect x="1" y="923.26" width="1584" height="1" fill="#444444" fill-opacity="0.3"/><rect x="1" y="929.10" width="1584" height="1" fill="#444444" fill-opacity="0.3"/><rect x="32.90" y="49" width="1" height="886" fill="#545454"/><rect x="91.28" y="49" width="1" height="886" fill="#545454"/><rect x="149.66" y="49" width="1" height="886" fill="#545454"/><rect x="208.04" y="49" width="1" height="886" fill="#545454"/><rect x="266.42" y="49" width="1" height="886" fill="#545454"/><rect x="324.80" y="49" width="1" height="886" fill="#545454"/><rect x="383.18" y="49" width="1" height="886" fill="#545454"/><rect x="441.56" y="49" width="1" height="886" fill="#545454"/><rect x="499.94" y="49" width="1" height="886" fill="#545454"/><rect x="558.32" y="49" width="1" height="886" fill="#545454"/><rect x="616.70" y="49" width="1" height="886" fill="#545454"/><rect x="675.08" y="49" width="1" height="886" fill="#545454"/><rect x="733.46" y="49" width="1" height="886" fill="#545454"/><rect x="850.22" y="49" width="1" height="886" fill="#545454"/><rect x="908.60" y="49" width="1" height="886" fill="#545454"/><rect x="966.98" y="49" width="1" height="886" fill="#545454"/><rect x="1025.36" y="49" width="1" height="886" fill="#545454"/><rect x="1083.74" y="49" width="1" height="886" fill="#545454"/><rect x="1142.12" y="49" width="1" height="886" fill="#545454"/><rect x="1200.50" y="49" width="1" height="886" fill="#545454"/><rect x="1258.88" y="49" width="1" height="886" fill="#545454"/><rect x="1317.26" y="49" width="1" height="886" fill="#545454"/><rect x="1375.64" y="49" width="1" height="886" fill="#545454"/><rect x="1434.02" y="49" width="1" height="886" fill="#545454"/><rect x="1492.40" y="49" width="1" height="886" fill="#545454"/><rect x="1550.78" y="49" width="1" height="886" fill="#545454"/><rect x="1" y="82.59" width="1584" height="1" fill="#545454"/><rect x="1" y="140.97" width="1584" height="1" fill="#545454"/><rect x="1" y="199.35" width="1584" height="1" fill="#545454"/><rect x="1" y="257.73" width="1584" height="1" fill="#545454"/><rect x="1" y="316.11" width="1584" height="1" fill="#545454"/><rect x="1" y="374.49" width="1584" height="1" fill="#545454"/><rect x="1" y="432.87" width="1584" height="1" fill="#545454"/><rect x="1" y="549.63" width="1584" height="1" fill="#545454"/><rect x="1" y="608.01" width="1584" height="1" fill="#545454"/><rect x="1" y="666.39" width="1584" height="1" fill="#545454"/><rect x="1" y="724.77" width="1584" height="1" fill="#545454"/><rect x="1" y="783.15" width="1584" height="1" fill="#545454"/><rect x="1" y="841.53" width="1584" height="1" fill="#545454"/><rect x="1" y="899.91" width="1584" height="1" fill="#545454"/><rect x="1" y="490.95" width="1584" height="1.6" fill="#8e3c49"/><rect x="791.54" y="49" width="1.6" height="886" fill="#6b9b2b"/><rect x="442.06" y="141.47" width="700.56" height="700.56" fill="#a4a5a7"/><clipPath id="cl"><rect x="0" y="0" width="734" height="1032"/></clipPath><circle cx="792.34" cy="491.75" r="116.76" fill="none" stroke="#7b7c7e" stroke-width="1.3" clip-path="url(#cl)"/><rect x="733.96" y="258.23" width="700.56" height="467.03999999999996" fill="#a4a5a7"/><path d="M733.96 258.23H1434.52V725.27H733.96Z" fill="none" stroke="#1c1c1c" stroke-width="1.6"/><path d="M733.96 392V591" stroke="#7b7c7e" stroke-width="1.8"/><path d="M733.96 258.23L804.0160000000001 304.93399999999997" stroke="#1c1c1c" stroke-width="0.9"/><path d="M1434.52 258.23L1364.464 304.93399999999997" stroke="#1c1c1c" stroke-width="0.9"/><path d="M1434.52 725.27L1364.464 678.566" stroke="#1c1c1c" stroke-width="0.9"/><path d="M733.96 725.27L804.0160000000001 678.566" stroke="#1c1c1c" stroke-width="0.9"/><rect x="804.0160000000001" y="304.93399999999997" width="560.4479999999999" height="373.63200000000006" fill="#b6aea9" stroke="#f0ece8" stroke-width="1.5"/><path d="M802.816 304.93399999999997V678.566" stroke="#777" stroke-width="0.8"/><circle cx="1084" cy="491.5" r="2.2" fill="#e89a2a" stroke="#222" stroke-width="0.6"/><circle cx="792.5" cy="491.5" r="10.2" fill="none" stroke="#f4f4f4" stroke-width="1.6" stroke-dasharray="3.2 3.2"/><circle cx="792.5" cy="491.5" r="10.2" fill="none" stroke="#ff3c3c" stroke-width="1.6" stroke-dasharray="2.2 4.2" stroke-dashoffset="2.5"/><path d="M792.5 472V487M792.5 497V512" stroke="#000" stroke-width="1.2"/><path d="M772 491.5H787M797 491.5H812" stroke="#6e6e6e" stroke-width="1.4"/></g></svg>
<div style="left:1px;top:49px;width:1584px;height:22px;background:#303030;border-radius:8px 8px 0 0;"></div>
<div style="left:1px;top:71px;width:1584px;height:6px;background:#353535;border-radius:0px;"></div>
<div style="left:1px;top:76.5px;width:111px;height:23.8px;background:#353535;border-radius:0 0 6px 0;"></div>
<div style="left:1399.5px;top:76.5px;width:185.5px;height:23.8px;background:#353535;border-radius:0 0 0 6px;"></div>
<div style="left:10px;top:52px;width:30px;height:18px;background:#282828;border-radius:4px;box-shadow:inset 0 0 0 1px rgba(255,255,255,0.085)"></div>
<svg style="left:8px;top:50px;" width="64" height="22" viewBox="8 50 64 22"><path d="M15 60.5H20.8M14 64.5H28M18.5 58L16.6 68M24.5 62.3L25.2 68" stroke="#dcdcdc" stroke-width="1.1" fill="none"/><circle cx="24.5" cy="57.6" r="3.5" fill="#e4e4e4" stroke="#2a2a2a" stroke-width="0.6"/><path d="M22.6 56.8A2 2 0 0 1 23.8 55.5" stroke="#333" stroke-width="0.6" fill="none"/></svg>
<svg style="left:30px;top:59px;" width="9" height="6" viewBox="0 0 9 6"><path d="M1 1L4.5 4.5L8 1" fill="none" stroke="#d0d0d0" stroke-width="1.1"/></svg>
<div style="left:47px;top:52px;width:96px;height:18px;background:#282828;border-radius:4px;box-shadow:inset 0 0 0 1px rgba(255,255,255,0.085)"></div>
<svg style="left:8px;top:50px;" width="64" height="22" viewBox="8 50 64 22"><path d="M54.6 56.8H59.9M52.8 58.6V64.2M54.6 66H60.2M62 59.3V64.2" stroke="#cfcfcf" stroke-width="1" fill="none"/><rect x="51.3" y="55.3" width="3" height="3" fill="#282828" stroke="#cfcfcf" stroke-width="1"/><rect x="51.3" y="64.5" width="3" height="3" fill="#282828" stroke="#cfcfcf" stroke-width="1"/><rect x="60.5" y="64.5" width="3" height="3" fill="#282828" stroke="#cfcfcf" stroke-width="1"/><rect x="60" y="54" width="5" height="5" fill="#eaeaea"/></svg>
<span class="t" style="left:72.5px;top:56px;font-size:11.5px;line-height:11.5px;color:#e6e6e6;letter-spacing:0.2px;">Edit Mode</span>
<svg style="left:133px;top:59px;" width="9" height="6" viewBox="0 0 9 6"><path d="M1 1L4.5 4.5L8 1" fill="none" stroke="#d0d0d0" stroke-width="1.1"/></svg>
<div style="left:149.8px;top:52px;width:19.4px;height:18px;background:#545454;border-radius:4px 0 0 4px;"></div>
<div style="left:169.2px;top:52px;width:19.4px;height:18px;background:#545454;border-radius:0;"></div>
<div style="left:188.6px;top:52px;width:19.4px;height:18px;background:#4772b3;border-radius:0 4px 4px 0;"></div>
<div style="left:168.2px;top:52px;width:0.8px;height:18px;background:#3a3a3a;border-radius:0px;"></div>
<div style="left:187.9px;top:52px;width:0.8px;height:18px;background:#3a3a3a;border-radius:0px;"></div>
<svg style="left:145px;top:48px;" width="70" height="26" viewBox="0 0 70 26"><path d="M11.2 6.2H20.8V15.5L17.6 18.8H8.1V14.5M8.1 9.6L11.2 6.2" fill="none" stroke="#cfcfcf" stroke-width="1.1"/><rect x="6.9" y="10.2" width="4" height="3.8" fill="#eee"/><path d="M31.2 6.2H40.8V15.5L38.6 17.8M32.5 18.8H28.1V9.6L31.2 6.2" fill="none" stroke="#cfcfcf" stroke-width="1.1"/><rect x="33.8" y="10" width="3" height="10" fill="#eee"/><path d="M51 8.2L52.8 6.2H61.2V15.5L59 17.8" fill="none" stroke="#e8eefa" stroke-width="1.1"/><rect x="47" y="10" width="10" height="10" fill="#fff"/></svg>
<span class="t" style="left:221px;top:56px;font-size:11.5px;line-height:11.5px;color:#dcdcdc;letter-spacing:0.2px;">View</span>
<span class="t" style="left:262px;top:56px;font-size:11.5px;line-height:11.5px;color:#dcdcdc;letter-spacing:0.2px;">Select</span>
<span class="t" style="left:308.9px;top:56px;font-size:11.5px;line-height:11.5px;color:#dcdcdc;letter-spacing:0.2px;">Add</span>
<span class="t" style="left:346.3px;top:56px;font-size:11.5px;line-height:11.5px;color:#dcdcdc;letter-spacing:0.2px;">Mesh</span>
<span class="t" style="left:390px;top:56px;font-size:11.5px;line-height:11.5px;color:#dcdcdc;letter-spacing:0.2px;">Vertex</span>
<span class="t" style="left:439px;top:56px;font-size:11.5px;line-height:11.5px;color:#dcdcdc;letter-spacing:0.2px;">Edge</span>
<span class="t" style="left:481.3px;top:56px;font-size:11.5px;line-height:11.5px;color:#dcdcdc;letter-spacing:0.2px;">Face</span>
<span class="t" style="left:521px;top:56px;font-size:11.5px;line-height:11.5px;color:#dcdcdc;letter-spacing:0.2px;">UV</span>
<div style="left:668.3px;top:52px;width:75.7px;height:18px;background:#282828;border-radius:4px;box-shadow:inset 0 0 0 1px rgba(255,255,255,0.085)"></div>
<svg style="left:672px;top:53px;" width="16" height="16" viewBox="0 0 16 16"><path d="M3 2V13.5H14.5" fill="none" stroke="#ddd" stroke-width="1.1"/><path d="M3 13.5L12 4.5M3 2L1.3 4.5M3 2L4.7 4.5M14.5 13.5L12 11.8M14.5 13.5L12 15.2M12 4.5H8.5M12 4.5V8" fill="none" stroke="#ddd" stroke-width="1.1"/></svg>
<span class="t" style="left:693.3px;top:56px;font-size:11.5px;line-height:11.5px;color:#e6e6e6;letter-spacing:0.2px;">Global</span>
<svg style="left:733px;top:59px;" width="9" height="6" viewBox="0 0 9 6"><path d="M1 1L4.5 4.5L8 1" fill="none" stroke="#d0d0d0" stroke-width="1.1"/></svg>
<div style="left:751px;top:52px;width:30px;height:18px;background:#282828;border-radius:4px;box-shadow:inset 0 0 0 1px rgba(255,255,255,0.085)"></div>
<svg style="left:754px;top:53px;" width="16" height="16" viewBox="0 0 16 16"><circle cx="6" cy="10" r="3.5" fill="none" stroke="#ddd" stroke-width="1.1"/><circle cx="10" cy="6" r="3.5" fill="none" stroke="#ddd" stroke-width="1.1"/><circle cx="6" cy="10" r="1.2" fill="#ddd"/></svg>
<svg style="left:771px;top:59px;" width="9" height="6" viewBox="0 0 9 6"><path d="M1 1L4.5 4.5L8 1" fill="none" stroke="#d0d0d0" stroke-width="1.1"/></svg>
<div style="left:787.7px;top:52px;width:19px;height:18px;background:#565656;border-radius:4px 0 0 4px;"></div>
<div style="left:806.7px;top:52px;width:31.6px;height:18px;background:#282828;border-radius:0 4px 4px 0;"></div>
<svg style="left:789px;top:53px;" width="16" height="16" viewBox="0 0 16 16"><path d="M3.5 8.5A4.8 4.8 0 0 1 13 8V11M6.5 8.5A2 2 0 0 1 10 8.2V11" fill="none" stroke="#ccc" stroke-width="1.2"/><path d="M3.5 8.5V11M6.5 8.5V11" stroke="#ccc" stroke-width="1.2"/></svg>
<svg style="left:809px;top:53px;" width="17" height="16" viewBox="0 0 17 16"><path d="M1 8V14M16 8V14M1 11H16M4.5 10V12.5M7.5 10V12.5M10.5 10V12.5M13.5 10V12.5" stroke="#ddd" stroke-width="1"/><rect x="11" y="3" width="4" height="4" fill="#fff"/></svg>
<svg style="left:827px;top:59px;" width="9" height="6" viewBox="0 0 9 6"><path d="M1 1L4.5 4.5L8 1" fill="none" stroke="#d0d0d0" stroke-width="1.1"/></svg>
<div style="left:845px;top:52px;width:17.7px;height:18px;background:#565656;border-radius:4px 0 0 4px;"></div>
<div style="left:862.7px;top:52px;width:32.3px;height:18px;background:#282828;border-radius:0 4px 4px 0;"></div>
<svg style="left:846px;top:53px;" width="16" height="16" viewBox="0 0 16 16"><circle cx="8" cy="8" r="5.5" fill="none" stroke="#ccc" stroke-width="1.1"/><circle cx="8" cy="8" r="1.8" fill="#eee"/></svg>
<svg style="left:866px;top:53px;" width="16" height="16" viewBox="0 0 16 16"><path d="M1 14C5 14 5.5 2.5 8 2.5S11 14 15 14" fill="none" stroke="#777" stroke-width="1.1"/></svg>
<svg style="left:884px;top:59px;" width="9" height="6" viewBox="0 0 9 6"><path d="M1 1L4.5 4.5L8 1" fill="none" stroke="#777" stroke-width="1.1"/></svg>
<div style="left:1297px;top:52px;width:30px;height:18px;background:#282828;border-radius:4px;box-shadow:inset 0 0 0 1px rgba(255,255,255,0.085)"></div>
<svg style="left:1316px;top:59px;" width="9" height="6" viewBox="0 0 9 6"><path d="M1 1L4.5 4.5L8 1" fill="none" stroke="#d0d0d0" stroke-width="1.1"/></svg>
<div style="left:1334.2px;top:52px;width:18px;height:18px;background:#4772b3;border-radius:4px 0 0 4px;"></div>
<div style="left:1352.2px;top:52px;width:19.5px;height:18px;background:#282828;border-radius:0 4px 4px 0;"></div>
<svg style="left:1358px;top:59px;" width="9" height="6" viewBox="0 0 9 6"><path d="M1 1L4.5 4.5L8 1" fill="none" stroke="#d0d0d0" stroke-width="1.1"/></svg>
<div style="left:1379px;top:52px;width:18px;height:18px;background:#4772b3;border-radius:4px 0 0 4px;"></div>
<div style="left:1397px;top:52px;width:20.3px;height:18px;background:#282828;border-radius:0;"></div>
<div style="left:1417.3px;top:52px;width:31.7px;height:18px;background:#282828;border-radius:0 4px 4px 0;"></div>
<div style="left:1417.3px;top:52px;width:1px;height:18px;background:#303030;border-radius:0px;"></div>
<svg style="left:1403px;top:59px;" width="9" height="6" viewBox="0 0 9 6"><path d="M1 1L4.5 4.5L8 1" fill="none" stroke="#d0d0d0" stroke-width="1.1"/></svg>
<svg style="left:1438px;top:59px;" width="9" height="6" viewBox="0 0 9 6"><path d="M1 1L4.5 4.5L8 1" fill="none" stroke="#d0d0d0" stroke-width="1.1"/></svg>
<div style="left:1456px;top:52px;width:18px;height:18px;background:#545454;border-radius:4px;box-shadow:inset 0 0 0 1px rgba(255,255,255,0.085)"></div>
<svg style="left:1457px;top:53px;" width="16" height="16" viewBox="0 0 16 16"><rect x="5.5" y="2.5" width="9" height="9" fill="none" stroke="#ddd" stroke-width="1"/><rect x="2.5" y="5.5" width="9" height="9" fill="#545454" stroke="#ddd" stroke-width="1"/><path d="M5 12H8M9 9V10.5" stroke="#ddd" stroke-width="1"/></svg>
<div style="left:1481px;top:52px;width:18px;height:18px;background:#545454;border-radius:4px 0 0 4px;"></div>
<div style="left:1499px;top:52px;width:19px;height:18px;background:#4772b3;border-radius:0;"></div>
<div style="left:1518px;top:52px;width:19px;height:18px;background:#545454;border-radius:0;"></div>
<div style="left:1537px;top:52px;width:19px;height:18px;background:#545454;border-radius:0;"></div>
<div style="left:1556px;top:52px;width:20px;height:18px;background:#282828;border-radius:0 4px 4px 0;"></div>
<svg style="left:1482px;top:53px;" width="16" height="16" viewBox="0 0 16 16"><circle cx="8" cy="8" r="6.5" fill="none" stroke="#ccc" stroke-width="1"/><ellipse cx="8" cy="8" rx="3" ry="6.5" fill="none" stroke="#ccc" stroke-width="1"/><path d="M1.5 6H14.5M1.5 10H14.5" stroke="#ccc" stroke-width="1"/></svg>
<svg style="left:1501px;top:53px;" width="16" height="16" viewBox="0 0 16 16"><circle cx="8" cy="8" r="6.8" fill="#dde4f0"/></svg>
<svg style="left:1520px;top:53px;" width="16" height="16" viewBox="0 0 16 16"><circle cx="8" cy="8" r="6.3" fill="none" stroke="#ccc" stroke-width="1.1"/><path d="M8 1.7A6.3 6.3 0 0 0 8 14.3V8H14.3A6.3 6.3 0 0 0 8 1.7Z" fill="#ccc" fill-opacity="0.85"/></svg>
<svg style="left:1539px;top:53px;" width="16" height="16" viewBox="0 0 16 16"><circle cx="8" cy="8" r="6.3" fill="none" stroke="#ccc" stroke-width="1.1"/><path d="M4 7A4.5 4.5 0 0 1 7.5 3.5" fill="none" stroke="#ccc" stroke-width="1.3"/></svg>
<svg style="left:1562px;top:59px;" width="9" height="6" viewBox="0 0 9 6"><path d="M1 1L4.5 4.5L8 1" fill="none" stroke="#d0d0d0" stroke-width="1.1"/></svg>
<div style="left:9.3px;top:79px;width:18.8px;height:18px;background:#4772b3;border-radius:4px 0 0 4px;"></div>
<div style="left:28.05px;top:79px;width:18.75px;height:18px;background:#545454;border-radius:0;"></div>
<div style="left:46.8px;top:79px;width:18.75px;height:18px;background:#545454;border-radius:0;"></div>
<div style="left:65.55px;top:79px;width:18.75px;height:18px;background:#545454;border-radius:0;"></div>
<div style="left:84.3px;top:79px;width:18.75px;height:18px;background:#545454;border-radius:0 4px 4px 0;"></div>
<div style="left:27.55px;top:79px;width:1px;height:18px;background:#3a3a3a;border-radius:0px;"></div>
<div style="left:46.3px;top:79px;width:1px;height:18px;background:#3a3a3a;border-radius:0px;"></div>
<div style="left:65.05px;top:79px;width:1px;height:18px;background:#3a3a3a;border-radius:0px;"></div>
<div style="left:83.8px;top:79px;width:1px;height:18px;background:#3a3a3a;border-radius:0px;"></div>
<svg style="left:10.5px;top:80px;" width="16" height="16" viewBox="0 0 16 16"><rect x="2.5" y="2.5" width="11" height="11" fill="none" stroke="#fff" stroke-width="1.2" stroke-dasharray="2.2 1.4" stroke-dashoffset="1"/></svg>
<svg style="left:29.5px;top:80px;" width="16" height="16" viewBox="0 0 16 16"><path d="M1.5 7H6V2H14.5V10.5H10V14.5H1.5Z" fill="#ccc"/></svg>
<svg style="left:48px;top:80px;" width="16" height="16" viewBox="0 0 16 16"><rect x="2" y="5" width="9" height="9" fill="none" stroke="#ccc" stroke-width="1.2" stroke-dasharray="1.6 1.4"/><path d="M5.5 2H14V10.5H11V5H5.5Z" fill="#ccc"/></svg>
<svg style="left:67px;top:80px;" width="16" height="16" viewBox="0 0 16 16"><path d="M2 5H5V2H14V11H11V14H2Z M5 5V11H11V5Z" fill="#ccc" fill-rule="evenodd"/></svg>
<svg style="left:85.5px;top:80px;" width="16" height="16" viewBox="0 0 16 16"><rect x="2" y="2" width="12" height="12" fill="none" stroke="#ccc" stroke-width="1.2" stroke-dasharray="1.8 1.6"/><rect x="5" y="5" width="6" height="6" fill="#ccc"/></svg>
<svg style="left:1409px;top:80px;" width="16" height="16" viewBox="0 0 16 16"><path d="M8 1V15" stroke="#ccc" stroke-width="1" stroke-dasharray="1.5 1"/><path d="M7 4Q3 0 1.5 3Q1 6 4 8Q1 10 2 13Q4 15.5 7 12" fill="none" stroke="#ccc" stroke-width="1"/><path d="M9 4Q13 0 14.5 3Q15 6 12 8Q15 10 14 13Q12 15.5 9 12" fill="none" stroke="#ccc" stroke-width="1"/></svg>
<div style="left:1428px;top:79px;width:17px;height:18px;background:#545454;border-radius:4px 0 0 4px;"></div>
<div style="left:1445px;top:79px;width:17px;height:18px;background:#545454;border-radius:0;"></div>
<div style="left:1462px;top:79px;width:17px;height:18px;background:#545454;border-radius:0 4px 4px 0;"></div>
<div style="left:1445px;top:79px;width:1px;height:18px;background:#3a3a3a;border-radius:0px;"></div>
<div style="left:1462px;top:79px;width:1px;height:18px;background:#3a3a3a;border-radius:0px;"></div>
<span class="t" style="left:1136.6px;width:600px;text-align:center;top:83px;font-size:11.5px;line-height:11.5px;color:#dcdcdc;letter-spacing:0.2px;">X</span>
<span class="t" style="left:1153.6px;width:600px;text-align:center;top:83px;font-size:11.5px;line-height:11.5px;color:#dcdcdc;letter-spacing:0.2px;">Y</span>
<span class="t" style="left:1170.6px;width:600px;text-align:center;top:83px;font-size:11.5px;line-height:11.5px;color:#dcdcdc;letter-spacing:0.2px;">Z</span>
<div style="left:1486px;top:79px;width:18px;height:18px;background:#545454;border-radius:4px;box-shadow:inset 0 0 0 1px rgba(255,255,255,0.085)"></div>
<svg style="left:1487px;top:80px;" width="16" height="16" viewBox="0 0 16 16"><rect x="1.5" y="10.5" width="3.5" height="3.5" fill="none" stroke="#ddd" stroke-width="1"/><rect x="11" y="1.5" width="3.5" height="3.5" fill="#545454" stroke="#ddd" stroke-width="1"/><path d="M4 10Q5 5 11 4.5" fill="none" stroke="#ddd" stroke-width="1.2" stroke-dasharray="2 1.5"/></svg>
<div style="left:1511px;top:79px;width:65px;height:18px;background:#282828;border-radius:4px;box-shadow:inset 0 0 0 1px rgba(255,255,255,0.085)"></div>
<span class="t" style="left:1517.5px;top:83px;font-size:11.5px;line-height:11.5px;color:#e6e6e6;letter-spacing:0.2px;">Options</span>
<svg style="left:1563px;top:86px;" width="9" height="6" viewBox="0 0 9 6"><path d="M1 1L4.5 4.5L8 1" fill="none" stroke="#d0d0d0" stroke-width="1.1"/></svg>
<svg style="left:1295px;top:49px;" width="160" height="24" viewBox="1295 49 160 24"><path d="M1302.2 57.5Q1307.5 51.8 1312.9 57.5Q1307.5 63.2 1302.2 57.5Z" fill="none" stroke="#e0e0e0" stroke-width="1.2"/><circle cx="1307.5" cy="57.4" r="1.9" fill="none" stroke="#e0e0e0" stroke-width="1"/><circle cx="1307.5" cy="57.4" r="0.7" fill="#e0e0e0"/><path d="M1298.7 60.6L1306.8 64L1303.6 64.8L1302.9 67.9Z" fill="#e0e0e0"/><path d="M1336.3 56.4Q1346.5 57 1347.7 67.8" fill="none" stroke="#eaeaea" stroke-width="1"/><path d="M1339.1 64.9L1349 55.3M1345 55.3H1349.2V59.5" fill="none" stroke="#eaeaea" stroke-width="1"/><circle cx="1337.9" cy="66.1" r="1.6" fill="#4772b3" stroke="#eaeaea" stroke-width="0.9"/><path d="M1384.5 59.5A4.3 4.3 0 0 0 1391.2 67.1" fill="none" stroke="#eaeaea" stroke-width="1.1"/><circle cx="1390.8" cy="58.6" r="4.6" fill="#eaeaea"/><path d="M1388.9 59.2L1390.6 60.4" stroke="#4772b3" stroke-width="1"/><path d="M1422.7 57.1H1431M1422.7 57.1V66.1M1422.7 66.1H1432.1M1432.1 60V66.1" fill="none" stroke="#cfcfcf" stroke-width="0.9"/><rect x="1421.3" y="55.7" width="2.8" height="2.8" fill="#282828" stroke="#cfcfcf" stroke-width="0.9"/><rect x="1421.3" y="64.7" width="2.8" height="2.8" fill="#282828" stroke="#cfcfcf" stroke-width="0.9"/><rect x="1430.7" y="64.7" width="2.8" height="2.8" fill="#282828" stroke="#cfcfcf" stroke-width="0.9"/><rect x="1430.2" y="54.3" width="4.6" height="4.6" fill="#eaeaea"/></svg>
<div style="left:1583px;top:26.5px;width:171px;height:19.5px;background:#1d1d1d;border-radius:5px;box-shadow:inset 0 0 0 1px #2e2e2e"></div>
<div style="left:1615px;top:27px;width:1px;height:18.5px;background:#2a2a2a;border-radius:0px;"></div>
<svg style="left:1587px;top:28px;" width="17" height="16" viewBox="0 0 16 16"><path d="M5.3 1.2C6.4 3.8 8.6 7.6 8.6 9.6Q8.6 11.6 5.2 11.6Q1.4 11.6 1.6 9.6C1.8 7.6 4.2 3.8 5.3 1.2Z" fill="#ddd"/><circle cx="12.5" cy="3" r="2" fill="#ddd"/><circle cx="10" cy="11" r="3.8" fill="#1d1d1d" stroke="#ddd" stroke-width="1.1"/><path d="M8.5 11A1.6 1.6 0 0 1 10 9.4" fill="none" stroke="#ddd" stroke-width="0.9"/></svg>
<svg style="left:1603px;top:33px;" width="9" height="6" viewBox="0 0 9 6"><path d="M1 1L4.5 4.5L8 1" fill="none" stroke="#d0d0d0" stroke-width="1.1"/></svg>
<span class="t" style="left:1622px;top:31px;font-size:11.5px;line-height:11.5px;color:#e0e0e0;letter-spacing:0.2px;">Scene</span>
<svg style="left:1696px;top:28px;" width="15" height="15" viewBox="0 0 16 16"><path d="M10 1.5L14.5 6L12.5 6.5L9.5 9.5L9.8 12.5L8.5 13.5L2.5 7.5L3.5 6.2L6.5 6.5L9.5 3.5Z" fill="none" stroke="#999" stroke-width="1.1"/><path d="M5 11L1.5 14.5" stroke="#999" stroke-width="1.1"/></svg>
<div style="left:1714px;top:26.5px;width:20px;height:19.5px;background:#3a3a3a;border-radius:0px;"></div>
<svg style="left:1716px;top:28px;" width="16" height="16" viewBox="0 0 16 16"><rect x="5" y="1.5" width="9.5" height="10" rx="1" fill="none" stroke="#ddd" stroke-width="1.1"/><path d="M3 4.5V14.5H11.5" fill="none" stroke="#ddd" stroke-width="1.1"/></svg>
<svg style="left:1739px;top:31px;" width="10" height="10" viewBox="0 0 10 10"><path d="M1 1L9 9M9 1L1 9" stroke="#555" stroke-width="1.1"/></svg>
<div style="left:1760px;top:26.5px;width:151px;height:19.5px;background:#1d1d1d;border-radius:5px;box-shadow:inset 0 0 0 1px #2e2e2e"></div>
<div style="left:1792px;top:27px;width:1px;height:18.5px;background:#2a2a2a;border-radius:0px;"></div>
<svg style="left:1764px;top:28px;" width="16" height="16" viewBox="0 0 16 16"><rect x="5" y="1.5" width="9.5" height="9" fill="none" stroke="#ddd" stroke-width="1.1"/><path d="M3 4V12.5H12M1.2 6V14.5H10" fill="none" stroke="#ddd" stroke-width="1.1"/><path d="M6 9.5L9 5L11 7.5L12.5 6L14 9.5Z" fill="#ddd"/></svg>
<svg style="left:1781px;top:33px;" width="9" height="6" viewBox="0 0 9 6"><path d="M1 1L4.5 4.5L8 1" fill="none" stroke="#d0d0d0" stroke-width="1.1"/></svg>
<span class="t" style="left:1799px;top:31px;font-size:11.5px;line-height:11.5px;color:#e0e0e0;letter-spacing:0.2px;">ViewLayer</span>
<div style="left:1872px;top:26.5px;width:19px;height:19.5px;background:#3a3a3a;border-radius:0px;"></div>
<svg style="left:1873.5px;top:28px;" width="16" height="16" viewBox="0 0 16 16"><rect x="5" y="1.5" width="9.5" height="10" rx="1" fill="none" stroke="#ddd" stroke-width="1.1"/><path d="M3 4.5V14.5H11.5" fill="none" stroke="#ddd" stroke-width="1.1"/></svg>
<svg style="left:1896px;top:31px;" width="10" height="10" viewBox="0 0 10 10"><path d="M1 1L9 9M9 1L1 9" stroke="#555" stroke-width="1.1"/></svg>
<svg style="left:0px;top:0px;" width="40" height="48" viewBox="0 0 40 48"><path d="M3.3 14.1L9.6 9.6M5.2 8.4H11.6M10 5.2L13.8 8.2" stroke="#ea7a0c" stroke-width="1.9" stroke-linecap="round"/><circle cx="12.2" cy="11.6" r="4.9" fill="#ea7a0c"/><circle cx="12.3" cy="11.5" r="3.0" fill="#f4f4f4"/><circle cx="12.4" cy="11.5" r="1.6" fill="#265787"/><path d="M10.4 39.4L16.6 34.9M12.6 32.7H18.9M18.3 29.6L22.6 32.8" stroke="#e0e0e0" stroke-width="1.8" stroke-linecap="round"/><circle cx="20.3" cy="36.4" r="4.4" fill="#181818" stroke="#e0e0e0" stroke-width="1.9"/><circle cx="20.3" cy="36.3" r="1.5" fill="none" stroke="#e0e0e0" stroke-width="1.1"/></svg>
<span class="t" style="left:65.1px;top:112px;font-size:11.5px;line-height:11.5px;color:#f0f0f0;letter-spacing:0.4px;text-shadow:0 0 1.5px #000,0 0 1.5px #000,0 1px 1px #000;-webkit-text-stroke:0.35px #f4f4f4">Top Orthographic</span>
<span class="t" style="left:65.1px;top:130px;font-size:11.5px;line-height:11.5px;color:#f0f0f0;letter-spacing:0.2px;text-shadow:0 0 1.5px #000,0 0 1.5px #000,0 1px 1px #000;-webkit-text-stroke:0.35px #f4f4f4">(1) lamp_head | Cube.002</span>
<span class="t" style="left:65.1px;top:148px;font-size:11.5px;line-height:11.5px;color:#f0f0f0;letter-spacing:0.2px;text-shadow:0 0 1.5px #000,0 0 1.5px #000,0 1px 1px #000;-webkit-text-stroke:0.35px #f4f4f4">Centimeters</span>
<div style="left:9px;top:110px;width:37.6px;height:67.4px;background:#282828;border-radius:5px;"></div>
<div style="left:9px;top:110px;width:37.6px;height:33.7px;background:#4772b3;border-radius:5px 5px 0 0;"></div>
<svg style="left:12.2px;top:110.55px;" width="31.2" height="31.2" viewBox="0 0 22 22"><rect x="3.5" y="3.2" width="15.5" height="15.5" fill="none" stroke="#f5a623" stroke-width="1.1" stroke-dasharray="2.6 1.6"/><path d="M9.2 7.3V14.6L10.9 12.6L14.6 12.1Z" fill="#e2e2e2"/></svg>
<svg style="left:42px;top:137.1px;" width="4" height="4" viewBox="0 0 4 4"><path d="M4 0V4H0Z" fill="#8a8a8a"/></svg>
<div style="left:9px;top:143.7px;width:37.6px;height:1px;background:#343434;border-radius:0px;"></div>
<svg style="left:12.2px;top:145.65px;" width="31.2" height="31.2" viewBox="0 0 22 22"><circle cx="11" cy="10.4" r="8.1" fill="none" stroke="#f0f0f0" stroke-width="1.1"/><circle cx="11" cy="10.4" r="8.1" fill="none" stroke="#a83a3a" stroke-width="1.1" stroke-dasharray="3.2 9.5" stroke-dashoffset="1"/><path d="M11 5.6V8.9M11 11.9V15.2M6.2 10.4H9.5M12.5 10.4H15.8" stroke="#9a9a9a" stroke-width="1"/></svg>
<div style="left:9px;top:184.99999999999997px;width:37.6px;height:137.6px;background:#282828;border-radius:5px;"></div>
<svg style="left:12.2px;top:185.55px;" width="31.2" height="31.2" viewBox="0 0 22 22"><path d="M11 2.7L13.2 5.34H8.8Z" fill="#e2e2e2"/><path d="M11 18.9L13.2 16.259999999999998H8.8Z" fill="#e2e2e2"/><path d="M2.75 10.8L5.390000000000001 8.600000000000001V13.0Z" fill="#e2e2e2"/><path d="M19.25 10.8L16.61 8.600000000000001V13.0Z" fill="#e2e2e2"/><path d="M11 5.3V7.8M11 13.8V16.3M5.3 10.8H7.8M14.2 10.8H16.7" stroke="#e2e2e2" stroke-width="1.2"/></svg>
<div style="left:9px;top:218.69999999999996px;width:37.6px;height:1px;background:#343434;border-radius:0px;"></div>
<svg style="left:12.2px;top:220.65px;" width="31.2" height="31.2" viewBox="0 0 22 22"><path d="M5.2 9.3A6.8 6.8 0 0 1 16.6 7.6M16.8 12A6.8 6.8 0 0 1 5.4 13.8" fill="none" stroke="#e2e2e2" stroke-width="0.9"/><path d="M11 8.4L13.3 10.7L11 13L8.7 10.7Z" fill="#b8b8b8"/><path d="M4.2 13L5.7 11.2H2.7Z" fill="#e2e2e2"/><path d="M17.8 8.6L19.3 10.399999999999999H16.3Z" fill="#e2e2e2"/></svg>
<div style="left:9px;top:253.79999999999998px;width:37.6px;height:1px;background:#343434;border-radius:0px;"></div>
<svg style="left:12.2px;top:255.75px;" width="31.2" height="31.2" viewBox="0 0 22 22"><path d="M5.3 10.5V5H16.8V16.1H11.5" fill="none" stroke="#bdbdbd" stroke-width="0.9"/><rect x="4.7" y="10.7" width="6.3" height="6.1" fill="#e2e2e2"/><path d="M11.6 10.3L15.5 6.4" stroke="#e2e2e2" stroke-width="1"/><path d="M15.9 6L12.9 6.6L15.3 9Z" fill="#e2e2e2"/></svg>
<svg style="left:42px;top:282.3px;" width="4" height="4" viewBox="0 0 4 4"><path d="M4 0V4H0Z" fill="#8a8a8a"/></svg>
<div style="left:9px;top:288.9px;width:37.6px;height:1px;background:#343434;border-radius:0px;"></div>
<svg style="left:12.2px;top:290.85px;" width="31.2" height="31.2" viewBox="0 0 22 22"><circle cx="11" cy="10.75" r="7.3" fill="none" stroke="#e2e2e2" stroke-width="0.9" stroke-dasharray="3.3 1.5" stroke-dashoffset="1.6"/><rect x="8.4" y="8.1" width="5.2" height="5.2" fill="#e2e2e2"/><path d="M11 3L12.5 4.8H9.5Z" fill="#e2e2e2"/><path d="M11 18.5L12.5 16.7H9.5Z" fill="#e2e2e2"/><path d="M3.2 10.75L5.0 9.25V12.25Z" fill="#e2e2e2"/><path d="M18.8 10.75L17.0 9.25V12.25Z" fill="#e2e2e2"/></svg>
<div style="left:9px;top:330.2px;width:37.6px;height:67.4px;background:#282828;border-radius:5px;"></div>
<svg style="left:12.2px;top:330.75px;" width="31.2" height="31.2" viewBox="0 0 22 22"><path d="M3.7 15L5 12.2L12.6 4.6Q13.6 3.6 14.6 4.6L15.3 5.3Q16.3 6.3 15.3 7.3L7.7 14.9L4.8 16.2Z" fill="#e2e2e2"/><path d="M12 5.2L14.7 7.9" stroke="#282828" stroke-width="0.7"/><path d="M4.2 16.8Q6.5 18.6 10 16.2T15 14.6Q17.5 14.8 19.5 17.2" fill="none" stroke="#8fd9b0" stroke-width="0.9"/></svg>
<svg style="left:42px;top:357.3px;" width="4" height="4" viewBox="0 0 4 4"><path d="M4 0V4H0Z" fill="#8a8a8a"/></svg>
<div style="left:9px;top:363.90000000000003px;width:37.6px;height:1px;background:#343434;border-radius:0px;"></div>
<svg style="left:12.2px;top:365.85px;" width="31.2" height="31.2" viewBox="0 0 22 22"><g transform="translate(1.4 0)"><path d="M6.7 12.4A7.6 7.6 0 0 1 14.3 20" fill="none" stroke="none"/><path d="M6.8 11.6A6.1 6.1 0 0 1 12.9 17.5H6.8Z" fill="#8fd9b0"/><path d="M6.8 10.2A7.5 7.5 0 0 1 14.3 17.5" fill="none" stroke="#8fd9b0" stroke-width="0.8"/><rect x="3.6" y="2.7" width="2.6" height="16.2" fill="#e2e2e2"/><rect x="3.6" y="16.4" width="14.5" height="2.5" fill="#e2e2e2"/><rect x="5.4" y="4.2" width="1.3" height="0.55" fill="#282828"/><rect x="5.4" y="6.1" width="1.3" height="0.55" fill="#282828"/><rect x="5.4" y="8.0" width="1.3" height="0.55" fill="#282828"/><rect x="5.4" y="9.899999999999999" width="1.3" height="0.55" fill="#282828"/><rect x="5.4" y="11.8" width="1.3" height="0.55" fill="#282828"/><rect x="5.4" y="13.7" width="1.3" height="0.55" fill="#282828"/><rect x="7.4" y="16.4" width="0.55" height="1.2" fill="#282828"/><rect x="9.3" y="16.4" width="0.55" height="1.2" fill="#282828"/><rect x="11.2" y="16.4" width="0.55" height="1.2" fill="#282828"/><rect x="13.1" y="16.4" width="0.55" height="1.2" fill="#282828"/><rect x="15.0" y="16.4" width="0.55" height="1.2" fill="#282828"/><rect x="16.9" y="16.4" width="0.55" height="1.2" fill="#282828"/></g></svg>
<div style="left:9px;top:405.2px;width:37.6px;height:32.300000000000004px;background:#282828;border-radius:5px;"></div>
<svg style="left:12.2px;top:405.75px;" width="31.2" height="31.2" viewBox="0 0 22 22"><path d="M5.6 9.1H15.8V19H5.6Z" fill="none" stroke="#8fd9b0" stroke-width="0.8"/><path d="M5.6 9.1L9.2 5.3H19.400000000000002V15.2L15.8 19M15.8 9.1L19.400000000000002 5.3" fill="none" stroke="#8fd9b0" stroke-width="0.8" stroke-linejoin="round"/><path d="M4.8 1.8V7.6M1.9 4.7H7.7" stroke="#8fd9b0" stroke-width="1.4"/></svg>
<svg style="left:42px;top:432.3px;" width="4" height="4" viewBox="0 0 4 4"><path d="M4 0V4H0Z" fill="#8a8a8a"/></svg>
<div style="left:9px;top:445.1px;width:37.6px;height:418.40000000000003px;background:#282828;border-radius:5px;"></div>
<svg style="left:12.2px;top:445.65px;" width="31.2" height="31.2" viewBox="0 0 22 22"><path d="M4.2 5.8H14.6V17.6H4.2Z" fill="none" stroke="#e2e2e2" stroke-width="0.9"/><path d="M4.2 5.8L7.7 1.9H18.1V13.700000000000001L14.6 17.6M14.6 5.8L18.1 1.9" fill="none" stroke="#e2e2e2" stroke-width="0.9" stroke-linejoin="round"/><path d="M4.2 5.8L7.7 1.9H18.1L14.6 5.8Z" fill="#8fd9b0"/><rect x="4.2" y="5.8" width="10.4" height="3.6" fill="#8fd9b0"/><path d="M14.6 5.8L18.1 1.9V5.5L14.6 9.4Z" fill="#8fd9b0"/></svg>
<svg style="left:42px;top:472.2px;" width="4" height="4" viewBox="0 0 4 4"><path d="M4 0V4H0Z" fill="#8a8a8a"/></svg>
<div style="left:9px;top:478.80000000000007px;width:37.6px;height:1px;background:#343434;border-radius:0px;"></div>
<svg style="left:12.2px;top:480.75px;" width="31.2" height="31.2" viewBox="0 0 22 22"><path d="M4.2 7.15H14.6V17.56H4.2Z" fill="none" stroke="#e2e2e2" stroke-width="0.9"/><path d="M4.2 7.15L7.7 3.5500000000000003H18.1V13.959999999999999L14.6 17.56M14.6 7.15L18.1 3.5500000000000003" fill="none" stroke="#e2e2e2" stroke-width="0.9" stroke-linejoin="round"/><path d="M4.2 7.15H14.6V17.56H4.2Z M7.8 10.4V13.6H11V10.4Z" fill="#8fd9b0" fill-rule="evenodd"/><path d="M4.2 7.15L7.8 10.4M14.6 7.15L11 10.4M14.6 17.56L11 13.6M4.2 17.56L7.8 13.6" stroke="#282828" stroke-width="0.6"/></svg>
<div style="left:9px;top:513.9000000000001px;width:37.6px;height:1px;background:#343434;border-radius:0px;"></div>
<svg style="left:12.2px;top:515.85px;" width="31.2" height="31.2" viewBox="0 0 22 22"><path d="M4.2 9.94H14.6V16.76H4.2Z" fill="none" stroke="#e2e2e2" stroke-width="0.9"/><path d="M14.6 9.94L18.07 6.7V13.3L14.6 16.76" fill="none" stroke="#e2e2e2" stroke-width="0.9"/><path d="M6.35 6L8.5 3.12H16.1L13.2 6" fill="none" stroke="#e2e2e2" stroke-width="0.9"/><path d="M4.2 9.94L6.35 6H13.2L14.6 9.94Z" fill="#8fd9b0"/><path d="M14.6 9.94L18.07 6.7L16.1 3.12L13.2 6Z" fill="#8fd9b0"/></svg>
<div style="left:9px;top:549.0000000000001px;width:37.6px;height:1px;background:#343434;border-radius:0px;"></div>
<svg style="left:12.2px;top:550.95px;" width="31.2" height="31.2" viewBox="0 0 22 22"><path d="M4.2 7.0H14.6V17.4H4.2Z" fill="none" stroke="#e2e2e2" stroke-width="0.9"/><path d="M4.2 7.0L7.7 3.8H18.1V14.2L14.6 17.4M14.6 7.0L18.1 3.8" fill="none" stroke="#e2e2e2" stroke-width="0.9" stroke-linejoin="round"/><path d="M9.1 17.4V7L12.6 3.8" fill="none" stroke="#8fd9b0" stroke-width="0.9"/><rect x="8.2" y="16.6" width="1.8" height="1.6" fill="#282828"/><path d="M9.1 17.4V7" stroke="#8fd9b0" stroke-width="0.9"/></svg>
<svg style="left:42px;top:577.5px;" width="4" height="4" viewBox="0 0 4 4"><path d="M4 0V4H0Z" fill="#8a8a8a"/></svg>
<div style="left:9px;top:584.1px;width:37.6px;height:1px;background:#343434;border-radius:0px;"></div>
<svg style="left:12.2px;top:586.05px;" width="31.2" height="31.2" viewBox="0 0 22 22"><path d="M4.2 7.0H14.6V17.8H4.2Z" fill="none" stroke="#e2e2e2" stroke-width="0.9"/><path d="M4.2 7.0L7.7 3.8H18.1V14.600000000000001L14.6 17.8M14.6 7.0L18.1 3.8" fill="none" stroke="#e2e2e2" stroke-width="0.9" stroke-linejoin="round"/><path d="M12.5 3.8L7.8 7.4L12.1 17.4" fill="none" stroke="#8fd9b0" stroke-width="0.9"/><circle cx="12.5" cy="3.8" r="1.2" fill="#8fd9b0"/><circle cx="7.8" cy="7.4" r="1.2" fill="#8fd9b0"/><circle cx="12.1" cy="17.4" r="1.2" fill="#8fd9b0"/></svg>
<svg style="left:42px;top:612.6px;" width="4" height="4" viewBox="0 0 4 4"><path d="M4 0V4H0Z" fill="#8a8a8a"/></svg>
<div style="left:9px;top:619.2px;width:37.6px;height:1px;background:#343434;border-radius:0px;"></div>
<svg style="left:12.2px;top:621.15px;" width="31.2" height="31.2" viewBox="0 0 22 22"><path d="M9.6 3.5L17.1 6L17.5 16.8L5.3 17.1L5.3 10Z" fill="#8fd9b0"/><circle cx="9.6" cy="3.5" r="1.25" fill="#f0f0f0"/><circle cx="17.1" cy="6" r="1.25" fill="#f0f0f0"/><circle cx="17.5" cy="16.8" r="1.25" fill="#f0f0f0"/><circle cx="5.3" cy="17.1" r="1.25" fill="#f0f0f0"/><circle cx="5.3" cy="10" r="1.25" fill="#f0f0f0"/></svg>
<div style="left:9px;top:654.3000000000001px;width:37.6px;height:1px;background:#343434;border-radius:0px;"></div>
<svg style="left:12.2px;top:656.25px;" width="31.2" height="31.2" viewBox="0 0 22 22"><path d="M10.3 11.5V4.2A7.3 7.3 0 0 0 3.0 11.5A7.3 7.3 0 0 0 17.6 11.5A7.3 7.3 0 0 0 15.5 6.3Z" fill="#8fd9b0"/><path d="M10.3 4.2A7.3 7.3 0 0 1 15.5 6.3" fill="none" stroke="#cfcfcf" stroke-width="0.8"/><path d="M10.3 11.5V3.6M10.3 11.5L16.2 5.8" stroke="#cfcfcf" stroke-width="0.8"/><path d="M3 11.5H17.6M10.3 11.5V18.8M10.3 11.5L5.1 16.7M10.3 11.5L15.5 16.7M10.3 11.5L5.1 6.3" stroke="#282828" stroke-width="0.6"/></svg>
<svg style="left:42px;top:682.8px;" width="4" height="4" viewBox="0 0 4 4"><path d="M4 0V4H0Z" fill="#8a8a8a"/></svg>
<div style="left:9px;top:689.4000000000001px;width:37.6px;height:1px;background:#343434;border-radius:0px;"></div>
<svg style="left:12.2px;top:691.35px;" width="31.2" height="31.2" viewBox="0 0 22 22"><path d="M5 9Q5 3.2 11.3 2.6Q17.9 3.2 17.7 9Q18 14.5 11.5 15.7Q5.2 15.5 4.8 9.5Z" fill="#dccbf3"/><path d="M4.6 10.5Q11 9.6 17.9 9.8M11.3 2.6Q11.8 9 11.1 15.6" fill="none" stroke="#333" stroke-width="0.6"/><path d="M5.6 6Q11 4.6 17 5.6M5.8 13.6Q11 12.8 16.8 13.2" fill="none" stroke="#bba9d6" stroke-width="0.4"/></svg>
<svg style="left:42px;top:717.9px;" width="4" height="4" viewBox="0 0 4 4"><path d="M4 0V4H0Z" fill="#8a8a8a"/></svg>
<div style="left:9px;top:724.5000000000001px;width:37.6px;height:1px;background:#343434;border-radius:0px;"></div>
<svg style="left:12.2px;top:726.45px;" width="31.2" height="31.2" viewBox="0 0 22 22"><path d="M7.8 6.25H14.6V16.3H7.8Z" fill="none" stroke="#e2e2e2" stroke-width="0.9"/><path d="M7.8 6.25L11.3 2.3H18.1V12.350000000000001L14.6 16.3M14.6 6.25L18.1 2.3" fill="none" stroke="#e2e2e2" stroke-width="0.9" stroke-linejoin="round"/><path d="M5.6 16.3V6.25L9.2 2.4" fill="none" stroke="#e2e2e2" stroke-width="0.8"/><path d="M6.8 16.3V6.25L10.4 2.4" fill="none" stroke="#dccbf3" stroke-width="0.7"/><path d="M2.6 0.9L5.4 -0.6V2.4Z" fill="#dccbf3"/><path d="M4.4 0.9H6.6" stroke="#dccbf3" stroke-width="1"/></svg>
<svg style="left:42px;top:753.0px;" width="4" height="4" viewBox="0 0 4 4"><path d="M4 0V4H0Z" fill="#8a8a8a"/></svg>
<div style="left:9px;top:759.6px;width:37.6px;height:1px;background:#343434;border-radius:0px;"></div>
<svg style="left:12.2px;top:761.55px;" width="31.2" height="31.2" viewBox="0 0 22 22"><rect x="7.1" y="6.2" width="8.2" height="7.9" rx="0.8" fill="#2a2a2a" stroke="#bdbdbd" stroke-width="1.1"/><path d="M9 8L13.4 12.3M13.4 8L9 12.3" stroke="#111" stroke-width="1.1"/><path d="M10.7 2.4L12.299999999999999 4.32H9.1Z" fill="#dccbf3"/><path d="M10.7 17.6L12.299999999999999 15.680000000000001H9.1Z" fill="#dccbf3"/><path d="M3.4 10.2L5.32 8.6V11.799999999999999Z" fill="#dccbf3"/><path d="M19.8 10.2L17.880000000000003 8.6V11.799999999999999Z" fill="#dccbf3"/><path d="M10.7 7.6L11.8 9.1H9.6Z M10.7 12.7L11.8 11.2H9.6Z M8.6 10.2L10 9.1V11.3Z M12.8 10.2L11.4 9.1V11.3Z" fill="#dccbf3"/></svg>
<svg style="left:42px;top:788.1px;" width="4" height="4" viewBox="0 0 4 4"><path d="M4 0V4H0Z" fill="#8a8a8a"/></svg>
<div style="left:9px;top:794.7px;width:37.6px;height:1px;background:#343434;border-radius:0px;"></div>
<svg style="left:12.2px;top:796.65px;" width="31.2" height="31.2" viewBox="0 0 22 22"><path d="M1.3 6.7L4.5 4.5L13.2 3.7L20.7 13.8L17.1 16.7H7.4Z" fill="#dccbf3"/><path d="M1.3 6.7L13.6 5.9L17.1 16.7M13.6 5.9L13.2 3.7" fill="none" stroke="#333" stroke-width="0.55"/><path d="M17.6 1.6L20.2 0.2V3Z" fill="#dccbf3"/><path d="M19 1.6H21.4" stroke="#dccbf3" stroke-width="1"/></svg>
<svg style="left:42px;top:823.2px;" width="4" height="4" viewBox="0 0 4 4"><path d="M4 0V4H0Z" fill="#8a8a8a"/></svg>
<div style="left:9px;top:829.8000000000001px;width:37.6px;height:1px;background:#343434;border-radius:0px;"></div>
<svg style="left:12.2px;top:831.75px;" width="31.2" height="31.2" viewBox="0 0 22 22"><path d="M5.3 5.35H15.3V16.1H5.3Z" fill="none" stroke="#bdbdbd" stroke-width="1.1"/><path d="M5.3 5.35L9.2 1.8H19.3V12.2L15.3 16.1M15.3 5.35L19.3 1.8" fill="none" stroke="#bdbdbd" stroke-width="1.1"/><path d="M15 5.7L1.7 10L5.3 15.4" fill="none" stroke="#dccbf3" stroke-width="0.8"/><circle cx="1.7" cy="10" r="1.3" fill="#dccbf3"/></svg>
<svg style="left:42px;top:858.3px;" width="4" height="4" viewBox="0 0 4 4"><path d="M4 0V4H0Z" fill="#8a8a8a"/></svg>
<svg style="left:1480px;top:100px;" width="104" height="215" viewBox="1480 100 104 215">
<path d="M1533.8 119.5V182.5" stroke="#6ea227" stroke-width="2"/>
<path d="M1501.5 150.6H1566" stroke="#c9364b" stroke-width="2"/>
<circle cx="1501.8" cy="150.6" r="7.6" fill="#6a3a42" stroke="#c9364b" stroke-width="1.5"/>
<circle cx="1533.8" cy="182.6" r="7.6" fill="#4d6230" stroke="#6ea227" stroke-width="1.5"/>
<circle cx="1565.7" cy="150.6" r="8.2" fill="#cc3a4f"/>
<circle cx="1533.8" cy="119.2" r="8.2" fill="#76b01e"/>
<circle cx="1533.8" cy="150.6" r="8.2" fill="#2d95f8"/>
<text x="1565.7" y="154.8" font-family="Liberation Sans" font-size="11.5" stroke="#2a0a10" stroke-width="0.35" fill="#2a0a10" text-anchor="middle">X</text>
<text x="1533.8" y="123.4" font-family="Liberation Sans" font-size="11.5" stroke="#10200a" stroke-width="0.35" fill="#10200a" text-anchor="middle">Y</text>
<text x="1533.8" y="154.8" font-family="Liberation Sans" font-size="11.5" stroke="#0a1a30" stroke-width="0.35" fill="#0a1a30" text-anchor="middle">Z</text>
<circle cx="1562" cy="205" r="13.5" fill="#2e2e2e" fill-opacity="0.75"/>
<circle cx="1562" cy="235.4" r="13.5" fill="#2e2e2e" fill-opacity="0.75"/>
<circle cx="1562" cy="265.6" r="13.5" fill="#2e2e2e" fill-opacity="0.75"/>
<circle cx="1562" cy="295.7" r="13.5" fill="#2e2e2e" fill-opacity="0.75"/>
</svg>
<svg style="left:1554px;top:197px;" width="16" height="16" viewBox="0 0 16 16"><circle cx="9.5" cy="6.5" r="4.8" fill="none" stroke="#e8e8e8" stroke-width="1.4"/><path d="M9.5 4V9M7 6.5H12" stroke="#e8e8e8" stroke-width="1.2"/><path d="M6 10L1.5 14.5" stroke="#e8e8e8" stroke-width="2"/></svg>
<svg style="left:1554px;top:227px;" width="16" height="16" viewBox="0 0 16 16"><path d="M4 15Q1 11 1.5 8.5Q2.5 7.5 4 9L5 10.5V3.5Q5.5 2 6.5 3.5V8V1.8Q7.5 0.5 8.5 1.8V8V2.5Q9.5 1.2 10.5 2.5V8.5V4Q11.5 3 12.5 4V11Q12.5 14 10.5 15.5Z" fill="#e8e8e8"/></svg>
<svg style="left:1554px;top:258px;" width="16" height="16" viewBox="0 0 16 16"><circle cx="5" cy="4.5" r="3.3" fill="none" stroke="#e8e8e8" stroke-width="1.2"/><circle cx="11" cy="4.5" r="3.3" fill="none" stroke="#e8e8e8" stroke-width="1.2"/><rect x="4" y="9" width="8" height="5.5" fill="none" stroke="#e8e8e8" stroke-width="1.2"/><path d="M12 11.5L15 9.5V14L12 12.5" fill="none" stroke="#e8e8e8" stroke-width="1.1"/><path d="M1 10H3M2 9V11" stroke="#e8e8e8" stroke-width="1"/></svg>
<svg style="left:1554px;top:288px;" width="16" height="16" viewBox="0 0 16 16"><rect x="1.5" y="1.5" width="13" height="13" fill="none" stroke="#e8e8e8" stroke-width="1.2"/><path d="M1.5 5.8H14.5M1.5 10.2H14.5M5.8 1.5V14.5M10.2 1.5V14.5" stroke="#e8e8e8" stroke-width="1.2"/></svg>
<div style="left:1574px;top:122px;width:11px;height:20px;background:#333;border-radius:4px 0 0 4px;opacity:0.6"></div>
<svg style="left:1576px;top:127px;" width="6" height="10" viewBox="0 0 6 10"><path d="M5 1L1.5 5L5 9" fill="none" stroke="#bbb" stroke-width="1.1"/></svg>
<div style="left:61.5px;top:719.5px;width:279px;height:210px;background:rgba(24,24,24,0.96);border-radius:5px;"></div>
<svg style="left:71px;top:729px;" width="10" height="7" viewBox="0 0 10 7"><path d="M1 1L5 5L9 1" fill="none" stroke="#bbb" stroke-width="1.1"/></svg>
<span class="t" style="left:83.3px;top:727px;font-size:11.5px;line-height:11.5px;color:#cfcfcf;letter-spacing:0.2px;">Extrude Region and Move</span>
<div style="left:179.3px;top:755.5px;width:13.5px;height:13.5px;background:#545454;border-radius:3px;"></div>
<span class="t" style="left:196.2px;top:757px;font-size:11.5px;line-height:11.5px;color:#bdbdbd;letter-spacing:0.2px;">Flip Normals</span>
<div style="left:179.3px;top:777.5px;width:13.5px;height:13.5px;background:#545454;border-radius:3px;"></div>
<span class="t" style="left:196.2px;top:779px;font-size:11.5px;line-height:11.5px;color:#bdbdbd;letter-spacing:0.2px;">Dissolve Orthogonal E...</span>
<div style="left:179.3px;top:796.5px;width:153.5px;height:58.7px;background:#545454;border-radius:4px;"></div>
<div style="left:179.3px;top:815.5px;width:153.5px;height:1px;background:#3f3f3f;border-radius:0px;"></div>
<div style="left:179.3px;top:835px;width:153.5px;height:1px;background:#3f3f3f;border-radius:0px;"></div>
<span class="t" style="left:-44.4px;width:600px;text-align:center;top:801px;font-size:11.5px;line-height:11.5px;color:#e6e6e6;letter-spacing:0.2px;">0 m</span>
<span class="t" style="left:-44.4px;width:600px;text-align:center;top:820px;font-size:11.5px;line-height:11.5px;color:#e6e6e6;letter-spacing:0.2px;">0 m</span>
<span class="t" style="left:-44.4px;width:600px;text-align:center;top:840px;font-size:11.5px;line-height:11.5px;color:#e6e6e6;letter-spacing:0.2px;">-0.25 m</span>
<span class="t" style="right:1750.2px;top:801px;font-size:11.5px;line-height:11.5px;color:#bdbdbd;letter-spacing:0.2px;">Move X</span>
<span class="t" style="right:1750.2px;top:820px;font-size:11.5px;line-height:11.5px;color:#bdbdbd;letter-spacing:0.2px;">Y</span>
<span class="t" style="right:1750.2px;top:840px;font-size:11.5px;line-height:11.5px;color:#bdbdbd;letter-spacing:0.2px;">Z</span>
<span class="t" style="right:1750.2px;top:863px;font-size:11.5px;line-height:11.5px;color:#bdbdbd;letter-spacing:0.2px;">Orientation</span>
<div style="left:179.3px;top:858.1px;width:153.5px;height:19.4px;background:#282828;border-radius:4px;box-shadow:inset 0 0 0 1px #3a3a3a"></div>
<svg style="left:183px;top:860px;" width="16" height="16" viewBox="0 0 16 16"><rect x="1.5" y="3" width="6" height="10" rx="1" fill="none" stroke="#ccc" stroke-width="1"/><path d="M4 8H13M10.5 5.5L13 8L10.5 10.5" fill="none" stroke="#ccc" stroke-width="1.1"/></svg>
<span class="t" style="left:205.4px;top:863px;font-size:11.5px;line-height:11.5px;color:#e6e6e6;letter-spacing:0.2px;">Normal</span>
<svg style="left:320px;top:865px;" width="9" height="6" viewBox="0 0 9 6"><path d="M1 1L4.5 4.5L8 1" fill="none" stroke="#ccc" stroke-width="1.1"/></svg>
<div style="left:179.3px;top:883.5px;width:13.5px;height:13.5px;background:#545454;border-radius:3px;"></div>
<span class="t" style="left:196.2px;top:885px;font-size:11.5px;line-height:11.5px;color:#bdbdbd;letter-spacing:0.2px;">Mirror Editing</span>
<div style="left:179.3px;top:905.5px;width:13.5px;height:13.5px;background:#545454;border-radius:3px;"></div>
<span class="t" style="left:196.2px;top:907px;font-size:11.5px;line-height:11.5px;color:#bdbdbd;letter-spacing:0.2px;">Proportional Editing</span>
<div style="left:1588px;top:49px;width:332px;height:309px;background:#282828;border-radius:8px;"></div>
<div style="left:1588px;top:49px;width:332px;height:26.5px;background:#2c2c2c;border-radius:8px 8px 0 0;"></div>
<div style="left:1597.3px;top:52px;width:31px;height:18px;background:#282828;border-radius:4px;box-shadow:inset 0 0 0 1px rgba(255,255,255,0.085)"></div>
<svg style="left:1601px;top:53px;" width="16" height="16" viewBox="0 0 16 16"><rect x="2" y="1.5" width="6" height="3" fill="#ddd"/><path d="M4 4.5V12H6.5M4 8H6.5" fill="none" stroke="#bbb" stroke-width="1"/><rect x="7" y="7" width="7" height="2.8" fill="#ddd"/><rect x="7" y="11" width="7" height="2.8" fill="#ddd"/></svg>
<svg style="left:1618px;top:59px;" width="9" height="6" viewBox="0 0 9 6"><path d="M1 1L4.5 4.5L8 1" fill="none" stroke="#d0d0d0" stroke-width="1.1"/></svg>
<div style="left:1634.3px;top:52px;width:31.4px;height:18px;background:#282828;border-radius:4px;box-shadow:inset 0 0 0 1px rgba(255,255,255,0.085)"></div>
<svg style="left:1638px;top:53px;" width="16" height="16" viewBox="0 0 16 16"><rect x="4.5" y="1.5" width="10" height="9" fill="#282828" stroke="#ccc" stroke-width="1"/><path d="M2.5 4V12.5H12M1 5.5V14H10.5" fill="none" stroke="#ccc" stroke-width="1"/><path d="M5.5 10L9 5.5L11 8L12.5 6.5L14 10Z" fill="#ddd"/><circle cx="8" cy="4" r="1" fill="#ddd"/></svg>
<svg style="left:1655px;top:59px;" width="9" height="6" viewBox="0 0 9 6"><path d="M1 1L4.5 4.5L8 1" fill="none" stroke="#d0d0d0" stroke-width="1.1"/></svg>
<div style="left:1684.3px;top:52px;width:118px;height:18px;background:#1d1d1d;border-radius:5px;box-shadow:inset 0 0 0 1px #3a3a3a"></div>
<svg style="left:1689px;top:54px;" width="14" height="14" viewBox="0 0 14 14"><circle cx="8.5" cy="5.5" r="4" fill="none" stroke="#bbb" stroke-width="1.2"/><path d="M5.5 8.5L1.5 12.5" stroke="#bbb" stroke-width="1.4"/></svg>
<span class="t" style="left:1710px;top:56px;font-size:11.5px;line-height:11.5px;color:#7a7a7a;letter-spacing:0.2px;">Search</span>
<div style="left:1855.7px;top:52px;width:31px;height:18px;background:#282828;border-radius:4px;box-shadow:inset 0 0 0 1px rgba(255,255,255,0.085)"></div>
<svg style="left:1859px;top:53px;" width="16" height="16" viewBox="0 0 16 16"><path d="M1.5 2H14.5L9.5 8V14.5L6.5 12.5V8Z" fill="none" stroke="#ddd" stroke-width="1.1"/></svg>
<svg style="left:1874px;top:59px;" width="9" height="6" viewBox="0 0 9 6"><path d="M1 1L4.5 4.5L8 1" fill="none" stroke="#d0d0d0" stroke-width="1.1"/></svg>
<div style="left:1892.7px;top:52px;width:18.3px;height:18px;background:#545454;border-radius:4px;box-shadow:inset 0 0 0 1px rgba(255,255,255,0.085)"></div>
<svg style="left:1894px;top:53px;" width="16" height="16" viewBox="0 0 16 16"><rect x="1.5" y="6.5" width="10" height="8" fill="none" stroke="#ccc" stroke-width="1"/><rect x="1.5" y="4" width="10" height="2.5" fill="#ccc"/><rect x="5" y="9" width="3" height="1.3" fill="#ccc"/><circle cx="12" cy="4" r="3.5" fill="#545454"/><path d="M12 1V7M9 4H15" stroke="#fff" stroke-width="1.3"/></svg>
<div style="left:1589px;top:76px;width:330px;height:20px;background:#2b2b2b;border-radius:0px;"></div>
<div style="left:1589px;top:116px;width:330px;height:20px;background:#2b2b2b;border-radius:0px;"></div>
<div style="left:1589px;top:156px;width:330px;height:20px;background:#2b2b2b;border-radius:0px;"></div>
<div style="left:1589px;top:196px;width:330px;height:20px;background:#2b2b2b;border-radius:0px;"></div>
<div style="left:1589px;top:236px;width:330px;height:20px;background:#2b2b2b;border-radius:0px;"></div>
<div style="left:1589px;top:276px;width:330px;height:20px;background:#2b2b2b;border-radius:0px;"></div>
<div style="left:1589px;top:316px;width:330px;height:20px;background:#2b2b2b;border-radius:0px;"></div>
<div style="left:1589px;top:176px;width:330px;height:20px;background:#334d80;border-radius:0px;"></div>
<div style="left:1618px;top:121px;width:1px;height:170px;background:#555;border-radius:0px;"></div>
<svg style="left:1596px;top:143px;top:143px" width="6" height="6" viewBox="0 0 6 6"><circle cx="3" cy="3" r="2" fill="#ccc"/></svg>
<svg style="left:1596px;top:143px;top:223px" width="6" height="6" viewBox="0 0 6 6"><circle cx="3" cy="3" r="2" fill="#ccc"/></svg>
<svg style="left:1591px;top:179px;" width="15" height="15" viewBox="0 0 15 15"><rect x="2" y="3" width="9" height="9" fill="none" stroke="#ccc" stroke-width="0.9"/><rect x="0.8" y="1.8" width="2.4" height="2.4" fill="#334d80" stroke="#ccc" stroke-width="0.8"/><rect x="0.8" y="10.8" width="2.4" height="2.4" fill="#334d80" stroke="#ccc" stroke-width="0.8"/><rect x="9.8" y="10.8" width="2.4" height="2.4" fill="#334d80" stroke="#ccc" stroke-width="0.8"/><rect x="9.5" y="0.5" width="4.5" height="4.5" fill="#eee"/></svg>
<svg style="left:1612px;top:78px;" width="15" height="15" viewBox="0 0 16 16"><rect x="1" y="1" width="14" height="3" fill="#ddd"/><rect x="2" y="5" width="12" height="9.5" fill="#ddd"/><rect x="6" y="7" width="4" height="1.5" fill="#333"/></svg>
<span class="t" style="left:1633.4px;top:82px;font-size:11.5px;line-height:11.5px;color:#e0e0e0;letter-spacing:0.2px;">Scene Collection</span>
<svg style="left:1615px;top:102px;" width="10" height="7" viewBox="0 0 10 7"><path d="M1 1L5 5L9 1" fill="none" stroke="#ccc" stroke-width="1.1"/></svg>
<div style="left:1629px;top:97px;width:20px;height:18px;background:#444;border-radius:4px;box-shadow:inset 0 0 0 1px #5a5a5a"></div>
<svg style="left:1632px;top:99px;" width="14" height="14" viewBox="0 0 16 16"><rect x="1" y="1" width="14" height="3" fill="#ddd"/><rect x="2" y="5" width="12" height="9.5" fill="#ddd"/><rect x="6" y="7" width="4" height="1.5" fill="#333"/></svg>
<span class="t" style="left:1653.3px;top:102px;font-size:11.5px;line-height:11.5px;color:#e0e0e0;letter-spacing:0.2px;">Collection</span>
<svg style="left:1854.5px;top:100.5px;" width="11" height="11" viewBox="0 0 11 11"><rect x="0" y="0" width="11" height="11" rx="1.5" fill="#e4e4e4"/><path d="M2.3 5.6L4.6 8L9 3" fill="none" stroke="#222" stroke-width="1.8"/></svg>
<svg style="left:1873px;top:98.0px;" width="15" height="15" viewBox="0 0 16 16"><path d="M1 8C4 2.3 12 2.3 15 8C12 13.7 4 13.7 1 8Z" fill="none" stroke="#e8e8e8" stroke-width="1.5"/><circle cx="8" cy="8" r="2.5" fill="none" stroke="#e8e8e8" stroke-width="1.2"/><circle cx="8" cy="8" r="0.9" fill="#e8e8e8"/></svg>
<svg style="left:1893px;top:97.5px;" width="15" height="15" viewBox="0 0 16 16"><path d="M1 5H4.5L5.8 3H10.2L11.5 5H15V14.5H1Z" fill="#e8e8e8"/><circle cx="8" cy="9.5" r="3.4" fill="none" stroke="#2a2a2a" stroke-width="1"/><circle cx="8" cy="9.5" r="1.7" fill="none" stroke="#2a2a2a" stroke-width="0.9"/></svg>
<svg style="left:1873px;top:118.0px;" width="15" height="15" viewBox="0 0 16 16"><path d="M1 8C4 2.3 12 2.3 15 8C12 13.7 4 13.7 1 8Z" fill="none" stroke="#e8e8e8" stroke-width="1.5"/><circle cx="8" cy="8" r="2.5" fill="none" stroke="#e8e8e8" stroke-width="1.2"/><circle cx="8" cy="8" r="0.9" fill="#e8e8e8"/></svg>
<svg style="left:1893px;top:117.5px;" width="15" height="15" viewBox="0 0 16 16"><path d="M1 5H4.5L5.8 3H10.2L11.5 5H15V14.5H1Z" fill="#e8e8e8"/><circle cx="8" cy="9.5" r="3.4" fill="none" stroke="#2a2a2a" stroke-width="1"/><circle cx="8" cy="9.5" r="1.7" fill="none" stroke="#2a2a2a" stroke-width="0.9"/></svg>
<svg style="left:1873px;top:138.0px;" width="15" height="15" viewBox="0 0 16 16"><path d="M1 8C4 2.3 12 2.3 15 8C12 13.7 4 13.7 1 8Z" fill="none" stroke="#e8e8e8" stroke-width="1.5"/><circle cx="8" cy="8" r="2.5" fill="none" stroke="#e8e8e8" stroke-width="1.2"/><circle cx="8" cy="8" r="0.9" fill="#e8e8e8"/></svg>
<svg style="left:1893px;top:137.5px;" width="15" height="15" viewBox="0 0 16 16"><path d="M1 5H4.5L5.8 3H10.2L11.5 5H15V14.5H1Z" fill="#e8e8e8"/><circle cx="8" cy="9.5" r="3.4" fill="none" stroke="#2a2a2a" stroke-width="1"/><circle cx="8" cy="9.5" r="1.7" fill="none" stroke="#2a2a2a" stroke-width="0.9"/></svg>
<svg style="left:1873px;top:178.0px;" width="15" height="15" viewBox="0 0 16 16"><path d="M1 8C4 2.3 12 2.3 15 8C12 13.7 4 13.7 1 8Z" fill="none" stroke="#e8e8e8" stroke-width="1.5"/><circle cx="8" cy="8" r="2.5" fill="none" stroke="#e8e8e8" stroke-width="1.2"/><circle cx="8" cy="8" r="0.9" fill="#e8e8e8"/></svg>
<svg style="left:1893px;top:177.5px;" width="15" height="15" viewBox="0 0 16 16"><path d="M1 5H4.5L5.8 3H10.2L11.5 5H15V14.5H1Z" fill="#e8e8e8"/><circle cx="8" cy="9.5" r="3.4" fill="none" stroke="#2a2a2a" stroke-width="1"/><circle cx="8" cy="9.5" r="1.7" fill="none" stroke="#2a2a2a" stroke-width="0.9"/></svg>
<svg style="left:1873px;top:218.0px;" width="15" height="15" viewBox="0 0 16 16"><path d="M1 8C4 2.3 12 2.3 15 8C12 13.7 4 13.7 1 8Z" fill="none" stroke="#e8e8e8" stroke-width="1.5"/><circle cx="8" cy="8" r="2.5" fill="none" stroke="#e8e8e8" stroke-width="1.2"/><circle cx="8" cy="8" r="0.9" fill="#e8e8e8"/></svg>
<svg style="left:1893px;top:217.5px;" width="15" height="15" viewBox="0 0 16 16"><path d="M1 5H4.5L5.8 3H10.2L11.5 5H15V14.5H1Z" fill="#e8e8e8"/><circle cx="8" cy="9.5" r="3.4" fill="none" stroke="#2a2a2a" stroke-width="1"/><circle cx="8" cy="9.5" r="1.7" fill="none" stroke="#2a2a2a" stroke-width="0.9"/></svg>
<svg style="left:1873px;top:258.0px;" width="15" height="15" viewBox="0 0 16 16"><path d="M1 8C4 2.3 12 2.3 15 8C12 13.7 4 13.7 1 8Z" fill="none" stroke="#e8e8e8" stroke-width="1.5"/><circle cx="8" cy="8" r="2.5" fill="none" stroke="#e8e8e8" stroke-width="1.2"/><circle cx="8" cy="8" r="0.9" fill="#e8e8e8"/></svg>
<svg style="left:1893px;top:257.5px;" width="15" height="15" viewBox="0 0 16 16"><path d="M1 5H4.5L5.8 3H10.2L11.5 5H15V14.5H1Z" fill="#e8e8e8"/><circle cx="8" cy="9.5" r="3.4" fill="none" stroke="#2a2a2a" stroke-width="1"/><circle cx="8" cy="9.5" r="1.7" fill="none" stroke="#2a2a2a" stroke-width="0.9"/></svg>
<svg style="left:1636px;top:123px;" width="7" height="10" viewBox="0 0 7 10"><path d="M1 1L5 5L1 9" fill="none" stroke="#ccc" stroke-width="1.1"/></svg>
<svg style="left:1651px;top:119px;" width="16" height="15" viewBox="0 0 16 15"><circle cx="5" cy="4" r="3.2" fill="#d48a4c"/><circle cx="11" cy="4" r="3.2" fill="#d48a4c"/><circle cx="5" cy="4" r="1" fill="#282828"/><circle cx="11" cy="4" r="1" fill="#282828"/><rect x="3" y="8" width="9" height="6" rx="1" fill="#d48a4c"/><path d="M12 11L16 8.5V14L12 12Z" fill="#d48a4c"/><rect x="0" y="9.5" width="3" height="2" fill="#d48a4c"/></svg>
<span class="t" style="left:1673.1px;top:122px;font-size:11.5px;line-height:11.5px;color:#e0e0e0;letter-spacing:0.2px;">Camera</span>
<div style="left:1733.5px;top:117px;width:21px;height:19px;background:#444;border-radius:5px;box-shadow:inset 0 0 0 1px #5a5a5a"></div>
<svg style="left:1736px;top:119px;" width="16" height="15" viewBox="0 0 16 15"><circle cx="5" cy="4" r="3" fill="none" stroke="#22c8a0" stroke-width="1.1"/><path d="M7.5 3A4 4 0 0 1 15 4Q15 7 11 7H3Q1 7 1 5" fill="none" stroke="#22c8a0" stroke-width="1.1"/><rect x="4" y="9" width="8" height="5" fill="none" stroke="#22c8a0" stroke-width="1.1"/><path d="M12 11.5L15.5 9V14Z" fill="none" stroke="#22c8a0" stroke-width="1"/><path d="M1 11.5H4" stroke="#22c8a0" stroke-width="1"/></svg>
<svg style="left:1635px;top:142px;" width="10" height="7" viewBox="0 0 10 7"><path d="M1 1L5 5L9 1" fill="none" stroke="#ccc" stroke-width="1.1"/></svg>
<svg style="left:1652px;top:138px;" width="15" height="15" viewBox="0 0 16 16"><path d="M0.5 1H15.5L8 16Z" fill="#d48a4c" stroke="#d48a4c" stroke-width="1" stroke-linejoin="round"/><path d="M5 4.5H11L8 10.5Z" fill="#282828"/></svg>
<span class="t" style="left:1673.1px;top:142px;font-size:11.5px;line-height:11.5px;color:#e0e0e0;letter-spacing:0.2px;">lamp_base</span>
<svg style="left:1672px;top:158px;" width="15" height="15" viewBox="0 0 16 16"><path d="M3 3H13L8 13Z" fill="none" stroke="#22c8a0" stroke-width="1.2"/><rect x="1" y="1" width="3.6" height="3.6" fill="#282828" stroke="#22c8a0" stroke-width="1.1"/><rect x="11.4" y="1" width="3.6" height="3.6" fill="#282828" stroke="#22c8a0" stroke-width="1.1"/><rect x="6.2" y="11.4" width="3.6" height="3.6" fill="#282828" stroke="#22c8a0" stroke-width="1.1"/></svg>
<span class="t" style="left:1693.3px;top:162px;font-size:11.5px;line-height:11.5px;color:#e0e0e0;letter-spacing:0.2px;">Cube.001</span>
<svg style="left:1635px;top:182px;" width="10" height="7" viewBox="0 0 10 7"><path d="M1 1L5 5L9 1" fill="none" stroke="#ccc" stroke-width="1.1"/></svg>
<div style="left:1649.5px;top:177px;width:21px;height:19px;background:#5a6f99;border-radius:5px;"></div>
<svg style="left:1652px;top:178.5px;" width="15" height="15" viewBox="0 0 16 16"><path d="M0.5 1H15.5L8 16Z" fill="#d48a4c" stroke="#d48a4c" stroke-width="1" stroke-linejoin="round"/><path d="M5 4.5H11L8 10.5Z" fill="#4a5f8a"/></svg>
<span class="t" style="left:1673.1px;top:182px;font-size:11.5px;line-height:11.5px;color:#ffaf29;letter-spacing:0.2px;">lamp_head</span>
<div style="left:1669.5px;top:197px;width:21px;height:19px;background:#2a4a40;border-radius:5px;box-shadow:inset 0 0 0 1px #3d5a50"></div>
<svg style="left:1672px;top:198.5px;" width="15" height="15" viewBox="0 0 16 16"><path d="M3 3H13L8 13Z" fill="none" stroke="#22c8a0" stroke-width="1.2"/><rect x="1" y="1" width="3.6" height="3.6" fill="#2a4a40" stroke="#22c8a0" stroke-width="1.1"/><rect x="11.4" y="1" width="3.6" height="3.6" fill="#2a4a40" stroke="#22c8a0" stroke-width="1.1"/><rect x="6.2" y="11.4" width="3.6" height="3.6" fill="#2a4a40" stroke="#22c8a0" stroke-width="1.1"/></svg>
<span class="t" style="left:1693.3px;top:202px;font-size:11.5px;line-height:11.5px;color:#e0e0e0;letter-spacing:0.2px;">Cube.002</span>
<svg style="left:1635px;top:222px;" width="10" height="7" viewBox="0 0 10 7"><path d="M1 1L5 5L9 1" fill="none" stroke="#ccc" stroke-width="1.1"/></svg>
<svg style="left:1652px;top:218px;" width="15" height="15" viewBox="0 0 16 16"><path d="M0.5 1H15.5L8 16Z" fill="#d48a4c" stroke="#d48a4c" stroke-width="1" stroke-linejoin="round"/><path d="M5 4.5H11L8 10.5Z" fill="#282828"/></svg>
<span class="t" style="left:1673.1px;top:222px;font-size:11.5px;line-height:11.5px;color:#e0e0e0;letter-spacing:0.2px;">lamp_stand</span>
<svg style="left:1672px;top:238px;" width="15" height="15" viewBox="0 0 16 16"><path d="M3 3H13L8 13Z" fill="none" stroke="#22c8a0" stroke-width="1.2"/><rect x="1" y="1" width="3.6" height="3.6" fill="#282828" stroke="#22c8a0" stroke-width="1.1"/><rect x="11.4" y="1" width="3.6" height="3.6" fill="#282828" stroke="#22c8a0" stroke-width="1.1"/><rect x="6.2" y="11.4" width="3.6" height="3.6" fill="#282828" stroke="#22c8a0" stroke-width="1.1"/></svg>
<span class="t" style="left:1693.3px;top:242px;font-size:11.5px;line-height:11.5px;color:#e0e0e0;letter-spacing:0.2px;">Cylinder</span>
<svg style="left:1635px;top:262px;" width="10" height="7" viewBox="0 0 10 7"><path d="M1 1L5 5L9 1" fill="none" stroke="#ccc" stroke-width="1.1"/></svg>
<svg style="left:1652px;top:258px;" width="15" height="16" viewBox="0 0 16 16"><circle cx="8" cy="6" r="5.5" fill="#d48a4c"/><path d="M5.5 5L7 8M10.5 5L9 8M5 5H11" stroke="#282828" stroke-width="1"/><rect x="4.5" y="11" width="7" height="1.5" fill="#d48a4c"/><rect x="5.5" y="13.5" width="5" height="1.5" fill="#d48a4c"/></svg>
<span class="t" style="left:1673.1px;top:262px;font-size:11.5px;line-height:11.5px;color:#e0e0e0;letter-spacing:0.2px;">Light</span>
<svg style="left:1672px;top:278px;" width="15" height="16" viewBox="0 0 16 16"><circle cx="8" cy="7" r="5.5" fill="none" stroke="#22c8a0" stroke-width="1.2"/><circle cx="8" cy="7" r="1.3" fill="#22c8a0"/><path d="M8 8V15" stroke="#22c8a0" stroke-width="1" stroke-dasharray="1.5 1"/></svg>
<span class="t" style="left:1693.3px;top:282px;font-size:11.5px;line-height:11.5px;color:#e0e0e0;letter-spacing:0.2px;">Light</span>
<div style="left:1588px;top:361px;width:332px;height:648px;background:#303030;border-radius:8px;"></div>
<div style="left:1588px;top:361px;width:332px;height:26px;background:#303030;border-radius:8px 8px 0 0;"></div>
<div style="left:1597.4px;top:363.5px;width:31.5px;height:19px;background:#282828;border-radius:4px;box-shadow:inset 0 0 0 1px rgba(255,255,255,0.085)"></div>
<svg style="left:1600px;top:365px;" width="16" height="15" viewBox="0 0 16 16"><rect x="1" y="1" width="14" height="6" rx="3" fill="#e8e8e8"/><rect x="8" y="2.5" width="5.5" height="3" rx="1.5" fill="#282828"/><rect x="1" y="8.5" width="14" height="6" rx="3" fill="#e8e8e8"/><rect x="8" y="10" width="5.5" height="3" rx="1.5" fill="#282828"/></svg>
<svg style="left:1620px;top:370px;" width="9" height="6" viewBox="0 0 9 6"><path d="M1 1L4.5 4.5L8 1" fill="none" stroke="#d0d0d0" stroke-width="1.1"/></svg>
<div style="left:1696.6px;top:364px;width:117.7px;height:19px;background:#1d1d1d;border-radius:5px;box-shadow:inset 0 0 0 1px #3a3a3a"></div>
<svg style="left:1701px;top:366px;" width="14" height="14" viewBox="0 0 14 14"><circle cx="8.5" cy="5.5" r="4" fill="none" stroke="#bbb" stroke-width="1.2"/><path d="M5.5 8.5L1.5 12.5" stroke="#bbb" stroke-width="1.4"/></svg>
<span class="t" style="left:1722.3px;top:368px;font-size:11.5px;line-height:11.5px;color:#7a7a7a;letter-spacing:0.2px;">Search</span>
<div style="left:1892px;top:364px;width:19.5px;height:19px;background:#282828;border-radius:4px;box-shadow:inset 0 0 0 1px rgba(255,255,255,0.085)"></div>
<svg style="left:1897.5px;top:371px;" width="9" height="6" viewBox="0 0 9 6"><path d="M1 1L4.5 4.5L8 1" fill="none" stroke="#d0d0d0" stroke-width="1.1"/></svg>
<div style="left:1588px;top:387px;width:29px;height:622px;background:#1d1d1d;border-radius:0 0 0 8px;"></div>
<div style="left:1591px;top:516px;width:26px;height:25.5px;background:#303030;border-radius:4px 0 0 4px;"></div>
<svg style="left:1596px;top:400px;" width="16" height="16" viewBox="0 0 16 16"><path d="M4 2V9" stroke="#d8d8d8" stroke-width="1.2"/><circle cx="4" cy="12" r="2.8" fill="#d8d8d8"/><path d="M11 15V7M9 2Q9 6 11 6.5Q13 6 13 2" fill="none" stroke="#d8d8d8" stroke-width="1.6"/></svg>
<svg style="left:1596px;top:436px;" width="16" height="16" viewBox="0 0 16 16"><rect x="1.5" y="5" width="13" height="9.5" rx="1" fill="none" stroke="#d8d8d8" stroke-width="1.3"/><path d="M4 2.5H9V5" fill="none" stroke="#d8d8d8" stroke-width="1.3"/><path d="M4 8H8M4 11H8" stroke="#d8d8d8" stroke-width="1.3"/><rect x="10" y="7.5" width="3" height="5" fill="#d8d8d8"/></svg>
<svg style="left:1596px;top:464px;" width="16" height="16" viewBox="0 0 16 16"><rect x="1" y="2" width="14" height="5" rx="1" fill="#d8d8d8"/><path d="M3 7V14.5H13V7" fill="none" stroke="#d8d8d8" stroke-width="1.3"/><path d="M5 13L8 9L11 13Z" fill="#d8d8d8"/></svg>
<svg style="left:1596px;top:492px;" width="16" height="16" viewBox="0 0 16 16"><rect x="5" y="1.5" width="9.5" height="9" fill="none" stroke="#d8d8d8" stroke-width="1.1"/><path d="M3 4V12.5H12M1.2 6V14.5H10" fill="none" stroke="#d8d8d8" stroke-width="1.1"/><path d="M6 9.5L9 5L11 7.5L12.5 6L14 9.5Z" fill="#d8d8d8"/></svg>
<svg style="left:1596px;top:520px;" width="16" height="16" viewBox="0 0 16 16"><path d="M5.3 1.2C6.4 3.8 8.6 7.6 8.6 9.6Q8.6 11.6 5.2 11.6Q1.4 11.6 1.6 9.6C1.8 7.6 4.2 3.8 5.3 1.2Z" fill="#d8d8d8"/><circle cx="12.5" cy="3" r="2" fill="#d8d8d8"/><circle cx="10" cy="11" r="3.8" fill="#303030" stroke="#d8d8d8" stroke-width="1.1"/><path d="M8.5 11A1.6 1.6 0 0 1 10 9.4" fill="none" stroke="#d8d8d8" stroke-width="0.9"/></svg>
<svg style="left:1596px;top:549px;" width="16" height="16" viewBox="0 0 16 16"><circle cx="8" cy="8" r="6.5" fill="none" stroke="#c05662" stroke-width="1.4"/><path d="M3 5Q6 5 6 8T9 12Q8 14 7 14.5M10 2Q9 5 12 6T14.5 9" fill="none" stroke="#c05662" stroke-width="1.8"/></svg>
<svg style="left:1596px;top:584px;" width="16" height="16" viewBox="0 0 16 16"><rect x="1" y="1.5" width="14" height="3" fill="#d8d8d8"/><rect x="2" y="5.5" width="12" height="9" fill="none" stroke="#d8d8d8" stroke-width="1.3"/><rect x="6" y="8" width="4" height="1.5" fill="#d8d8d8"/></svg>
<svg style="left:1596px;top:620px;" width="16" height="16" viewBox="0 0 16 16"><path d="M1.5 5V1.5H5M11 1.5H14.5V5M14.5 11V14.5H11M5 14.5H1.5V11" fill="none" stroke="#d48a4c" stroke-width="1.2"/><rect x="3.5" y="3.5" width="9" height="9" fill="#d48a4c"/></svg>
<svg style="left:1596px;top:648px;" width="16" height="16" viewBox="0 0 16 16"><path d="M2 14L8 8" stroke="#5b8fd6" stroke-width="3"/><path d="M9 9A4.5 4.5 0 0 1 13 2.2L10.5 4.8L11.2 6.6L13 7.3L15.6 4.8A4.5 4.5 0 0 1 9 9Z" fill="#5b8fd6"/></svg>
<svg style="left:1596px;top:677px;" width="16" height="16" viewBox="0 0 16 16"><path d="M3 3L13 13M3 3V13" stroke="#5b8fd6" stroke-width="1.2"/><path d="M3 6L12 4" stroke="#5b8fd6" stroke-width="1.2"/><circle cx="3" cy="3" r="2" fill="#5b8fd6"/><circle cx="3" cy="13" r="2" fill="#5b8fd6"/><circle cx="13" cy="13" r="2" fill="#5b8fd6"/><circle cx="12" cy="4" r="2" fill="#5b8fd6"/></svg>
<svg style="left:1596px;top:705px;" width="16" height="16" viewBox="0 0 16 16"><path d="M13 5A6.3 6.3 0 1 0 14 9" fill="none" stroke="#5b8fd6" stroke-width="1.5"/><circle cx="8" cy="8" r="2" fill="#5b8fd6"/><circle cx="12" cy="3.5" r="2.2" fill="#e8e8e8"/></svg>
<svg style="left:1596px;top:733px;" width="16" height="16" viewBox="0 0 16 16"><path d="M3 12A6 6 0 0 1 13 4" fill="none" stroke="#5b8fd6" stroke-width="1.5"/><circle cx="7" cy="10" r="4.5" fill="none" stroke="#5b8fd6" stroke-width="1.5"/><circle cx="7" cy="10" r="1.8" fill="#5b8fd6"/><circle cx="12.5" cy="4.5" r="1.8" fill="#5b8fd6"/></svg>
<svg style="left:1596px;top:761px;" width="16" height="16" viewBox="0 0 16 16"><path d="M3 3H13L8 13Z" fill="none" stroke="#22c8a0" stroke-width="1.3"/><rect x="1" y="1" width="3.6" height="3.6" fill="#1d1d1d" stroke="#22c8a0" stroke-width="1.1"/><rect x="11.4" y="1" width="3.6" height="3.6" fill="#1d1d1d" stroke="#22c8a0" stroke-width="1.1"/><rect x="6.2" y="11.4" width="3.6" height="3.6" fill="#1d1d1d" stroke="#22c8a0" stroke-width="1.1"/></svg>
<svg style="left:1596px;top:789px;" width="16" height="16" viewBox="0 0 16 16"><circle cx="8" cy="8" r="7" fill="#c05662"/><path d="M8 1A7 7 0 0 1 15 8H8V15A7 7 0 0 1 1 8H8Z" fill="#f0c8c8"/></svg>
<svg style="left:1628px;top:400px;" width="16" height="16" viewBox="0 0 16 16"><path d="M5.3 1.2C6.4 3.8 8.6 7.6 8.6 9.6Q8.6 11.6 5.2 11.6Q1.4 11.6 1.6 9.6C1.8 7.6 4.2 3.8 5.3 1.2Z" fill="#d8d8d8"/><circle cx="12.5" cy="3" r="2" fill="#d8d8d8"/><circle cx="10" cy="11" r="3.8" fill="#303030" stroke="#d8d8d8" stroke-width="1.1"/><path d="M8.5 11A1.6 1.6 0 0 1 10 9.4" fill="none" stroke="#d8d8d8" stroke-width="0.9"/></svg>
<span class="t" style="left:1651.3px;top:400px;font-size:11.5px;line-height:11.5px;color:#e0e0e0;letter-spacing:0.2px;">Scene</span>
<svg style="left:1894px;top:398px;" width="16" height="16" viewBox="0 0 16 16"><path d="M10 1.5L14.5 6L12.5 6.5L9.5 9.5L9.8 12.5L8.5 13.5L2.5 7.5L3.5 6.2L6.5 6.5L9.5 3.5Z" fill="none" stroke="#aaa" stroke-width="1.1"/><path d="M5 11L1.5 14.5" stroke="#aaa" stroke-width="1.1"/></svg>
<div style="left:1625px;top:424.6px;width:286.5px;height:111.4px;background:#3d3d3d;border-radius:5px;"></div>
<svg style="left:1633.5px;top:435.4px;" width="10" height="7" viewBox="0 0 10 7"><path d="M0.6 0.8L5 5.2L9.4 0.8" fill="none" stroke="#cfcfcf" stroke-width="1"/></svg>
<span class="t" style="left:1647px;top:433px;font-size:11.5px;line-height:11.5px;color:#e0e0e0;letter-spacing:0.2px;">Scene</span>
<svg style="left:1891px;top:437px;" width="12" height="6" viewBox="0 0 12 6"><rect x="1" y="0" width="1.2" height="1.2" fill="#9a9a9a"/><rect x="1" y="3" width="1.2" height="1.2" fill="#9a9a9a"/><rect x="4" y="0" width="1.2" height="1.2" fill="#9a9a9a"/><rect x="4" y="3" width="1.2" height="1.2" fill="#9a9a9a"/><rect x="7" y="0" width="1.2" height="1.2" fill="#9a9a9a"/><rect x="7" y="3" width="1.2" height="1.2" fill="#9a9a9a"/><rect x="10" y="0" width="1.2" height="1.2" fill="#9a9a9a"/><rect x="10" y="3" width="1.2" height="1.2" fill="#9a9a9a"/></svg>
<span class="t" style="right:182.8px;top:463px;font-size:11.5px;line-height:11.5px;color:#d2d2d2;letter-spacing:0.2px;">Camera</span>
<div style="left:1747px;top:459.4px;width:155.6px;height:17.1px;background:#1d1d1d;border-radius:4px;"></div>
<svg style="left:1750px;top:460px;" width="15" height="15" viewBox="0 0 15 15"><path d="M1.5 5V1.5H5M10 1.5H13.5V5M13.5 10V13.5H10M5 13.5H1.5V10" fill="none" stroke="#ddd" stroke-width="1.1"/><rect x="4" y="4" width="7" height="7" fill="#ddd"/></svg>
<span class="t" style="left:1772.5px;top:463px;font-size:11.5px;line-height:11.5px;color:#e6e6e6;letter-spacing:0.2px;">Camera</span>
<svg style="left:1886px;top:463px;" width="10" height="10" viewBox="0 0 10 10"><path d="M1 1L9 9M9 1L1 9" stroke="#ccc" stroke-width="1.2"/></svg>
<span class="t" style="right:182.8px;top:488px;font-size:11.5px;line-height:11.5px;color:#d2d2d2;letter-spacing:0.2px;">Background Scene</span>
<div style="left:1747px;top:484.3px;width:155.6px;height:17.1px;background:#1d1d1d;border-radius:4px;"></div>
<svg style="left:1750px;top:485px;" width="15" height="15" viewBox="0 0 16 16"><path d="M5.3 1.2C6.4 3.8 8.6 7.6 8.6 9.6Q8.6 11.6 5.2 11.6Q1.4 11.6 1.6 9.6C1.8 7.6 4.2 3.8 5.3 1.2Z" fill="#ddd"/><circle cx="12.5" cy="3" r="2" fill="#ddd"/><circle cx="10" cy="11" r="3.8" fill="#1d1d1d" stroke="#ddd" stroke-width="1.1"/></svg>
<span class="t" style="left:1772.5px;top:488px;font-size:11.5px;line-height:11.5px;color:#777;letter-spacing:0.2px;">Scene</span>
<span class="t" style="right:182.8px;top:513px;font-size:11.5px;line-height:11.5px;color:#d2d2d2;letter-spacing:0.2px;">Active Clip</span>
<div style="left:1747px;top:509.2px;width:155.6px;height:17.1px;background:#1d1d1d;border-radius:4px;"></div>
<svg style="left:1751px;top:510px;" width="14" height="15" viewBox="0 0 14 15"><path d="M1 6H13V14H1Z" fill="#ddd"/><path d="M1 3L12 1L12.5 3.5L1.5 5.5Z" fill="#ddd"/></svg>
<span class="t" style="left:1772.5px;top:513px;font-size:11.5px;line-height:11.5px;color:#777;letter-spacing:0.2px;">Movie Clip</span>
<div style="left:1625px;top:538.7px;width:286.5px;height:219.8px;background:#3d3d3d;border-radius:5px;"></div>
<svg style="left:1633.5px;top:548.6999999999999px;" width="10" height="7" viewBox="0 0 10 7"><path d="M0.6 0.8L5 5.2L9.4 0.8" fill="none" stroke="#cfcfcf" stroke-width="1"/></svg>
<span class="t" style="left:1647px;top:546px;font-size:11.5px;line-height:11.5px;color:#e0e0e0;letter-spacing:0.2px;">Units</span>
<svg style="left:1891px;top:550.3px;" width="12" height="6" viewBox="0 0 12 6"><rect x="1" y="0" width="1.2" height="1.2" fill="#9a9a9a"/><rect x="1" y="3" width="1.2" height="1.2" fill="#9a9a9a"/><rect x="4" y="0" width="1.2" height="1.2" fill="#9a9a9a"/><rect x="4" y="3" width="1.2" height="1.2" fill="#9a9a9a"/><rect x="7" y="0" width="1.2" height="1.2" fill="#9a9a9a"/><rect x="7" y="3" width="1.2" height="1.2" fill="#9a9a9a"/><rect x="10" y="0" width="1.2" height="1.2" fill="#9a9a9a"/><rect x="10" y="3" width="1.2" height="1.2" fill="#9a9a9a"/></svg>
<span class="t" style="right:182.8px;top:576px;font-size:11.5px;line-height:11.5px;color:#d2d2d2;letter-spacing:0.2px;">Unit System</span>
<div style="left:1747px;top:572.7px;width:155.6px;height:17.4px;background:#1d1d1d;border-radius:4px;"></div>
<span class="t" style="left:1753px;top:576px;font-size:11.5px;line-height:11.5px;color:#e6e6e6;letter-spacing:0.2px;">Metric</span>
<svg style="left:1890px;top:578.7px;" width="9" height="6" viewBox="0 0 9 6"><path d="M1 1L4.5 4.5L8 1" fill="none" stroke="#ddd" stroke-width="1.2"/></svg>
<span class="t" style="right:182.8px;top:601px;font-size:11.5px;line-height:11.5px;color:#d2d2d2;letter-spacing:0.2px;">Unit Scale</span>
<div style="left:1747px;top:597.6px;width:155.6px;height:17.1px;background:#545454;border-radius:4px;"></div>
<span class="t" style="left:1524.8999999999999px;width:600px;text-align:center;top:601px;font-size:11.5px;line-height:11.5px;color:#e6e6e6;letter-spacing:0.2px;">1.000000</span>
<div style="left:1747px;top:621.6px;width:12.5px;height:12.5px;background:#545454;border-radius:3px;"></div>
<span class="t" style="left:1763px;top:623px;font-size:11.5px;line-height:11.5px;color:#d2d2d2;letter-spacing:0.2px;">Separate Units</span>
<span class="t" style="right:182.8px;top:648px;font-size:11.5px;line-height:11.5px;color:#d2d2d2;letter-spacing:0.2px;">Rotation</span>
<div style="left:1747px;top:644.1px;width:155.6px;height:17.4px;background:#1d1d1d;border-radius:4px;"></div>
<span class="t" style="left:1753px;top:648px;font-size:11.5px;line-height:11.5px;color:#e6e6e6;letter-spacing:0.2px;">Degrees</span>
<svg style="left:1890px;top:650.1px;" width="9" height="6" viewBox="0 0 9 6"><path d="M1 1L4.5 4.5L8 1" fill="none" stroke="#ddd" stroke-width="1.2"/></svg>
<span class="t" style="right:182.8px;top:670px;font-size:11.5px;line-height:11.5px;color:#d2d2d2;letter-spacing:0.2px;">Length</span>
<div style="left:1747px;top:666.3px;width:155.6px;height:17.4px;background:#1d1d1d;border-radius:4px;"></div>
<span class="t" style="left:1753px;top:670px;font-size:11.5px;line-height:11.5px;color:#e6e6e6;letter-spacing:0.2px;">Meters</span>
<svg style="left:1890px;top:672.3px;" width="9" height="6" viewBox="0 0 9 6"><path d="M1 1L4.5 4.5L8 1" fill="none" stroke="#ddd" stroke-width="1.2"/></svg>
<span class="t" style="right:182.8px;top:692px;font-size:11.5px;line-height:11.5px;color:#d2d2d2;letter-spacing:0.2px;">Mass</span>
<div style="left:1747px;top:688.3px;width:155.6px;height:17.4px;background:#1d1d1d;border-radius:4px;"></div>
<span class="t" style="left:1753px;top:692px;font-size:11.5px;line-height:11.5px;color:#e6e6e6;letter-spacing:0.2px;">Kilograms</span>
<svg style="left:1890px;top:694.3px;" width="9" height="6" viewBox="0 0 9 6"><path d="M1 1L4.5 4.5L8 1" fill="none" stroke="#ddd" stroke-width="1.2"/></svg>
<span class="t" style="right:182.8px;top:714px;font-size:11.5px;line-height:11.5px;color:#d2d2d2;letter-spacing:0.2px;">Time</span>
<div style="left:1747px;top:710.3px;width:155.6px;height:17.4px;background:#1d1d1d;border-radius:4px;"></div>
<span class="t" style="left:1753px;top:714px;font-size:11.5px;line-height:11.5px;color:#e6e6e6;letter-spacing:0.2px;">Seconds</span>
<svg style="left:1890px;top:716.3px;" width="9" height="6" viewBox="0 0 9 6"><path d="M1 1L4.5 4.5L8 1" fill="none" stroke="#ddd" stroke-width="1.2"/></svg>
<span class="t" style="right:182.8px;top:736px;font-size:11.5px;line-height:11.5px;color:#d2d2d2;letter-spacing:0.2px;">Temperature</span>
<div style="left:1747px;top:732.3px;width:155.6px;height:17.4px;background:#1d1d1d;border-radius:4px;"></div>
<span class="t" style="left:1753px;top:736px;font-size:11.5px;line-height:11.5px;color:#e6e6e6;letter-spacing:0.2px;">Kelvin</span>
<svg style="left:1890px;top:738.3px;" width="9" height="6" viewBox="0 0 9 6"><path d="M1 1L4.5 4.5L8 1" fill="none" stroke="#ddd" stroke-width="1.2"/></svg>
<div style="left:1625px;top:761.2px;width:286.5px;height:24.5px;background:#3d3d3d;border-radius:5px;"></div>
<svg style="left:1635.6px;top:768.8px;" width="7" height="10" viewBox="0 0 7 10"><path d="M0.8 0.6L5.2 5L0.8 9.4" fill="none" stroke="#cfcfcf" stroke-width="1"/></svg>
<span class="t" style="left:1661px;top:769px;font-size:11.5px;line-height:11.5px;color:#e0e0e0;letter-spacing:0.2px;">Gravity</span>
<svg style="left:1891px;top:773.0px;" width="12" height="6" viewBox="0 0 12 6"><rect x="1" y="0" width="1.2" height="1.2" fill="#9a9a9a"/><rect x="1" y="3" width="1.2" height="1.2" fill="#9a9a9a"/><rect x="4" y="0" width="1.2" height="1.2" fill="#9a9a9a"/><rect x="4" y="3" width="1.2" height="1.2" fill="#9a9a9a"/><rect x="7" y="0" width="1.2" height="1.2" fill="#9a9a9a"/><rect x="7" y="3" width="1.2" height="1.2" fill="#9a9a9a"/><rect x="10" y="0" width="1.2" height="1.2" fill="#9a9a9a"/><rect x="10" y="3" width="1.2" height="1.2" fill="#9a9a9a"/></svg>
<div style="left:1646px;top:767.2px;width:12.5px;height:12.5px;background:#4772b3;border-radius:3px;"></div>
<svg style="left:1646px;top:767.2px;" width="12.5" height="12.5" viewBox="0 0 12.5 12.5"><path d="M2.8 6.5L5.3 9.2L9.8 3.2" fill="none" stroke="#fff" stroke-width="1.7"/></svg>
<div style="left:1625px;top:788.25px;width:286.5px;height:24.5px;background:#3d3d3d;border-radius:5px;"></div>
<svg style="left:1635.6px;top:795.8499999999999px;" width="7" height="10" viewBox="0 0 7 10"><path d="M0.8 0.6L5.2 5L0.8 9.4" fill="none" stroke="#cfcfcf" stroke-width="1"/></svg>
<span class="t" style="left:1647px;top:796px;font-size:11.5px;line-height:11.5px;color:#e0e0e0;letter-spacing:0.2px;">Simulation</span>
<svg style="left:1891px;top:800.05px;" width="12" height="6" viewBox="0 0 12 6"><rect x="1" y="0" width="1.2" height="1.2" fill="#9a9a9a"/><rect x="1" y="3" width="1.2" height="1.2" fill="#9a9a9a"/><rect x="4" y="0" width="1.2" height="1.2" fill="#9a9a9a"/><rect x="4" y="3" width="1.2" height="1.2" fill="#9a9a9a"/><rect x="7" y="0" width="1.2" height="1.2" fill="#9a9a9a"/><rect x="7" y="3" width="1.2" height="1.2" fill="#9a9a9a"/><rect x="10" y="0" width="1.2" height="1.2" fill="#9a9a9a"/><rect x="10" y="3" width="1.2" height="1.2" fill="#9a9a9a"/></svg>
<div style="left:1625px;top:815.3000000000001px;width:286.5px;height:24.5px;background:#3d3d3d;border-radius:5px;"></div>
<svg style="left:1635.6px;top:822.9px;" width="7" height="10" viewBox="0 0 7 10"><path d="M0.8 0.6L5.2 5L0.8 9.4" fill="none" stroke="#cfcfcf" stroke-width="1"/></svg>
<span class="t" style="left:1647px;top:823px;font-size:11.5px;line-height:11.5px;color:#e0e0e0;letter-spacing:0.2px;">Keying Sets</span>
<svg style="left:1891px;top:827.1px;" width="12" height="6" viewBox="0 0 12 6"><rect x="1" y="0" width="1.2" height="1.2" fill="#9a9a9a"/><rect x="1" y="3" width="1.2" height="1.2" fill="#9a9a9a"/><rect x="4" y="0" width="1.2" height="1.2" fill="#9a9a9a"/><rect x="4" y="3" width="1.2" height="1.2" fill="#9a9a9a"/><rect x="7" y="0" width="1.2" height="1.2" fill="#9a9a9a"/><rect x="7" y="3" width="1.2" height="1.2" fill="#9a9a9a"/><rect x="10" y="0" width="1.2" height="1.2" fill="#9a9a9a"/><rect x="10" y="3" width="1.2" height="1.2" fill="#9a9a9a"/></svg>
<div style="left:1625px;top:842.35px;width:286.5px;height:24.5px;background:#3d3d3d;border-radius:5px;"></div>
<svg style="left:1635.6px;top:849.9499999999999px;" width="7" height="10" viewBox="0 0 7 10"><path d="M0.8 0.6L5.2 5L0.8 9.4" fill="none" stroke="#cfcfcf" stroke-width="1"/></svg>
<span class="t" style="left:1647px;top:850px;font-size:11.5px;line-height:11.5px;color:#e0e0e0;letter-spacing:0.2px;">Audio</span>
<svg style="left:1891px;top:854.15px;" width="12" height="6" viewBox="0 0 12 6"><rect x="1" y="0" width="1.2" height="1.2" fill="#9a9a9a"/><rect x="1" y="3" width="1.2" height="1.2" fill="#9a9a9a"/><rect x="4" y="0" width="1.2" height="1.2" fill="#9a9a9a"/><rect x="4" y="3" width="1.2" height="1.2" fill="#9a9a9a"/><rect x="7" y="0" width="1.2" height="1.2" fill="#9a9a9a"/><rect x="7" y="3" width="1.2" height="1.2" fill="#9a9a9a"/><rect x="10" y="0" width="1.2" height="1.2" fill="#9a9a9a"/><rect x="10" y="3" width="1.2" height="1.2" fill="#9a9a9a"/></svg>
<div style="left:1625px;top:869.4000000000001px;width:286.5px;height:24.5px;background:#3d3d3d;border-radius:5px;"></div>
<svg style="left:1635.6px;top:877.0px;" width="7" height="10" viewBox="0 0 7 10"><path d="M0.8 0.6L5.2 5L0.8 9.4" fill="none" stroke="#cfcfcf" stroke-width="1"/></svg>
<span class="t" style="left:1647px;top:877px;font-size:11.5px;line-height:11.5px;color:#e0e0e0;letter-spacing:0.2px;">Rigid Body World</span>
<svg style="left:1891px;top:881.2px;" width="12" height="6" viewBox="0 0 12 6"><rect x="1" y="0" width="1.2" height="1.2" fill="#9a9a9a"/><rect x="1" y="3" width="1.2" height="1.2" fill="#9a9a9a"/><rect x="4" y="0" width="1.2" height="1.2" fill="#9a9a9a"/><rect x="4" y="3" width="1.2" height="1.2" fill="#9a9a9a"/><rect x="7" y="0" width="1.2" height="1.2" fill="#9a9a9a"/><rect x="7" y="3" width="1.2" height="1.2" fill="#9a9a9a"/><rect x="10" y="0" width="1.2" height="1.2" fill="#9a9a9a"/><rect x="10" y="3" width="1.2" height="1.2" fill="#9a9a9a"/></svg>
<div style="left:1625px;top:896.45px;width:286.5px;height:24.5px;background:#3d3d3d;border-radius:5px;"></div>
<svg style="left:1635.6px;top:904.05px;" width="7" height="10" viewBox="0 0 7 10"><path d="M0.8 0.6L5.2 5L0.8 9.4" fill="none" stroke="#cfcfcf" stroke-width="1"/></svg>
<span class="t" style="left:1647px;top:904px;font-size:11.5px;line-height:11.5px;color:#e0e0e0;letter-spacing:0.2px;">Light Probes</span>
<svg style="left:1891px;top:908.25px;" width="12" height="6" viewBox="0 0 12 6"><rect x="1" y="0" width="1.2" height="1.2" fill="#9a9a9a"/><rect x="1" y="3" width="1.2" height="1.2" fill="#9a9a9a"/><rect x="4" y="0" width="1.2" height="1.2" fill="#9a9a9a"/><rect x="4" y="3" width="1.2" height="1.2" fill="#9a9a9a"/><rect x="7" y="0" width="1.2" height="1.2" fill="#9a9a9a"/><rect x="7" y="3" width="1.2" height="1.2" fill="#9a9a9a"/><rect x="10" y="0" width="1.2" height="1.2" fill="#9a9a9a"/><rect x="10" y="3" width="1.2" height="1.2" fill="#9a9a9a"/></svg>
<div style="left:1625px;top:923.5px;width:286.5px;height:24.5px;background:#3d3d3d;border-radius:5px;"></div>
<svg style="left:1635.6px;top:931.0999999999999px;" width="7" height="10" viewBox="0 0 7 10"><path d="M0.8 0.6L5.2 5L0.8 9.4" fill="none" stroke="#cfcfcf" stroke-width="1"/></svg>
<span class="t" style="left:1647px;top:931px;font-size:11.5px;line-height:11.5px;color:#e0e0e0;letter-spacing:0.2px;">Animation</span>
<svg style="left:1891px;top:935.3px;" width="12" height="6" viewBox="0 0 12 6"><rect x="1" y="0" width="1.2" height="1.2" fill="#9a9a9a"/><rect x="1" y="3" width="1.2" height="1.2" fill="#9a9a9a"/><rect x="4" y="0" width="1.2" height="1.2" fill="#9a9a9a"/><rect x="4" y="3" width="1.2" height="1.2" fill="#9a9a9a"/><rect x="7" y="0" width="1.2" height="1.2" fill="#9a9a9a"/><rect x="7" y="3" width="1.2" height="1.2" fill="#9a9a9a"/><rect x="10" y="0" width="1.2" height="1.2" fill="#9a9a9a"/><rect x="10" y="3" width="1.2" height="1.2" fill="#9a9a9a"/></svg>
<div style="left:1625px;top:950.5500000000001px;width:286.5px;height:24.5px;background:#3d3d3d;border-radius:5px;"></div>
<svg style="left:1635.6px;top:958.15px;" width="7" height="10" viewBox="0 0 7 10"><path d="M0.8 0.6L5.2 5L0.8 9.4" fill="none" stroke="#cfcfcf" stroke-width="1"/></svg>
<span class="t" style="left:1647px;top:958px;font-size:11.5px;line-height:11.5px;color:#e0e0e0;letter-spacing:0.2px;">Custom Properties</span>
<svg style="left:1891px;top:962.35px;" width="12" height="6" viewBox="0 0 12 6"><rect x="1" y="0" width="1.2" height="1.2" fill="#9a9a9a"/><rect x="1" y="3" width="1.2" height="1.2" fill="#9a9a9a"/><rect x="4" y="0" width="1.2" height="1.2" fill="#9a9a9a"/><rect x="4" y="3" width="1.2" height="1.2" fill="#9a9a9a"/><rect x="7" y="0" width="1.2" height="1.2" fill="#9a9a9a"/><rect x="7" y="3" width="1.2" height="1.2" fill="#9a9a9a"/><rect x="10" y="0" width="1.2" height="1.2" fill="#9a9a9a"/><rect x="10" y="3" width="1.2" height="1.2" fill="#9a9a9a"/></svg>
<div style="left:1590px;top:423.5px;width:27px;height:1px;background:#171717;border-radius:0px;"></div>
<div style="left:1590px;top:571.6px;width:27px;height:1px;background:#171717;border-radius:0px;"></div>
<div style="left:1590px;top:606.9px;width:27px;height:1px;background:#171717;border-radius:0px;"></div>
<div style="left:1px;top:938px;width:1584px;height:26px;background:#303030;border-radius:8px 8px 0 0;"></div>
<div style="left:8.3px;top:941.7px;width:31px;height:19px;background:#282828;border-radius:4px;box-shadow:inset 0 0 0 1px rgba(255,255,255,0.085)"></div>
<svg style="left:12px;top:943px;" width="16" height="16" viewBox="0 0 16 16"><circle cx="8" cy="8" r="7" fill="#e8e8e8"/><path d="M10 3.5L6 8L10 12.5" fill="none" stroke="#282828" stroke-width="1.8"/></svg>
<svg style="left:29px;top:949px;" width="9" height="6" viewBox="0 0 9 6"><path d="M1 1L4.5 4.5L8 1" fill="none" stroke="#d0d0d0" stroke-width="1.1"/></svg>
<div style="left:45px;top:941.7px;width:132.3px;height:19px;background:#282828;border-radius:4px;box-shadow:inset 0 0 0 1px rgba(255,255,255,0.085)"></div>
<div style="left:116.7px;top:941.7px;width:1px;height:19px;background:#3a3a3a;border-radius:0px;"></div>
<span class="t" style="left:53.3px;top:946px;font-size:11.5px;line-height:11.5px;color:#e0e0e0;letter-spacing:0.2px;">Playback</span>
<svg style="left:106px;top:949px;" width="9" height="6" viewBox="0 0 9 6"><path d="M1 1L4.5 4.5L8 1" fill="none" stroke="#d0d0d0" stroke-width="1.1"/></svg>
<span class="t" style="left:124px;top:946px;font-size:11.5px;line-height:11.5px;color:#e0e0e0;letter-spacing:0.2px;">Keying</span>
<svg style="left:167px;top:949px;" width="9" height="6" viewBox="0 0 9 6"><path d="M1 1L4.5 4.5L8 1" fill="none" stroke="#d0d0d0" stroke-width="1.1"/></svg>
<span class="t" style="left:187.3px;top:946px;font-size:11.5px;line-height:11.5px;color:#e0e0e0;letter-spacing:0.2px;">View</span>
<span class="t" style="left:228px;top:946px;font-size:11.5px;line-height:11.5px;color:#e0e0e0;letter-spacing:0.2px;">Marker</span>
<div style="left:700px;top:941.7px;width:18.3px;height:19px;background:#545454;border-radius:4px 0 0 4px;"></div>
<div style="left:718.3px;top:941.7px;width:20px;height:19px;background:#282828;border-radius:0 4px 4px 0;"></div>
<svg style="left:701px;top:943px;" width="16" height="16" viewBox="0 0 16 16"><circle cx="8" cy="8" r="5.5" fill="none" stroke="#ddd" stroke-width="1.1"/></svg>
<svg style="left:723.5px;top:949px;" width="9" height="6" viewBox="0 0 9 6"><path d="M1 1L4.5 4.5L8 1" fill="none" stroke="#777" stroke-width="1.1"/></svg>
<div style="left:745px;top:941.7px;width:118.3px;height:19px;background:#545454;border-radius:4px;"></div>
<div style="left:764.72px;top:941.7px;width:1px;height:19px;background:#3a3a3a;border-radius:0px;"></div>
<div style="left:784.44px;top:941.7px;width:1px;height:19px;background:#3a3a3a;border-radius:0px;"></div>
<div style="left:804.16px;top:941.7px;width:1px;height:19px;background:#3a3a3a;border-radius:0px;"></div>
<div style="left:823.88px;top:941.7px;width:1px;height:19px;background:#3a3a3a;border-radius:0px;"></div>
<div style="left:843.6px;top:941.7px;width:1px;height:19px;background:#3a3a3a;border-radius:0px;"></div>
<svg style="left:746.9px;top:943.3px;" width="16" height="16" viewBox="0 0 16 16"><path d="M3 3V13" stroke="#eee" stroke-width="1.6"/><path d="M13 3V13L5 8Z" fill="#eee"/></svg>
<svg style="left:766.62px;top:943.3px;" width="16" height="16" viewBox="0 0 16 16"><path d="M1 8L4.5 3.5L8 8L4.5 12.5Z" fill="#eee"/><path d="M15 3.5V12.5L9 8Z" fill="#eee"/></svg>
<svg style="left:786.3399999999999px;top:943.3px;" width="16" height="16" viewBox="0 0 16 16"><path d="M12 2.5V13.5L3.5 8Z" fill="#eee"/></svg>
<svg style="left:806.06px;top:943.3px;" width="16" height="16" viewBox="0 0 16 16"><path d="M4 2.5V13.5L12.5 8Z" fill="#eee"/></svg>
<svg style="left:825.78px;top:943.3px;" width="16" height="16" viewBox="0 0 16 16"><path d="M1 3.5V12.5L7 8Z" fill="#eee"/><path d="M15 8L11.5 3.5L8 8L11.5 12.5Z" fill="#eee"/></svg>
<svg style="left:845.5px;top:943.3px;" width="16" height="16" viewBox="0 0 16 16"><path d="M13 3V13" stroke="#eee" stroke-width="1.6"/><path d="M3 3V13L11 8Z" fill="#eee"/></svg>
<div style="left:1302.7px;top:941.7px;width:73.3px;height:19px;background:#545454;border-radius:4px;"></div>
<span class="t" style="left:1039.3999999999999px;width:600px;text-align:center;top:946px;font-size:11.5px;line-height:11.5px;color:#e6e6e6;letter-spacing:0.2px;">1</span>
<div style="left:1382.7px;top:941.7px;width:19px;height:19px;background:#545454;border-radius:4px 0 0 4px;"></div>
<svg style="left:1384px;top:943px;" width="16" height="16" viewBox="0 0 16 16"><circle cx="8" cy="9" r="5.5" fill="none" stroke="#ddd" stroke-width="1.2"/><path d="M8 9V6M6 2H10M8 2V3.5M12.5 3.5L14 5" fill="none" stroke="#ddd" stroke-width="1.2"/></svg>
<div style="left:1401.7px;top:941.7px;width:174.3px;height:19px;background:#545454;border-radius:0 4px 4px 0;"></div>
<div style="left:1401.7px;top:941.7px;width:1px;height:19px;background:#3a3a3a;border-radius:0px;"></div>
<div style="left:1490px;top:941.7px;width:1px;height:19px;background:#3a3a3a;border-radius:0px;"></div>
<span class="t" style="left:1417.3px;top:946px;font-size:11.5px;line-height:11.5px;color:#e6e6e6;letter-spacing:0.2px;">Start</span>
<span class="t" style="right:443.09999999999997px;top:946px;font-size:11.5px;line-height:11.5px;color:#e6e6e6;letter-spacing:0.2px;">1</span>
<span class="t" style="left:1506px;top:946px;font-size:11.5px;line-height:11.5px;color:#e6e6e6;letter-spacing:0.2px;">End</span>
<span class="t" style="right:357.09999999999997px;top:946px;font-size:11.5px;line-height:11.5px;color:#e6e6e6;letter-spacing:0.2px;">250</span>
<div style="left:1px;top:964px;width:1584px;height:45px;background:#1d1d1d;border-radius:0 0 8px 8px;"></div>
<div style="left:2px;top:986.7px;width:1582px;height:22px;background:#313131;border-radius:0 0 8px 8px;"></div>
<div style="left:2px;top:986.7px;width:57px;height:22px;background:#222222;border-radius:0 0 0 8px;"></div>
<div style="left:1526.5px;top:986.7px;width:57.5px;height:22px;background:#232323;border-radius:0 0 8px 0;"></div>
<div style="left:8px;top:1006px;width:1570px;height:2.7px;background:rgba(255,255,255,0.03);border-radius:0px;"></div>
<svg style="left:0px;top:900px;" width="1920" height="132" viewBox="0 900 1920 132"><rect x="23" y="986.7" width="1" height="22" fill="#232323"/><rect x="53" y="986.7" width="1" height="22" fill="#181818"/><rect x="82" y="986.7" width="1" height="22" fill="#232323"/><rect x="112" y="986.7" width="1" height="22" fill="#181818"/><rect x="141" y="986.7" width="1" height="22" fill="#232323"/><rect x="170" y="986.7" width="1" height="22" fill="#181818"/><rect x="200" y="986.7" width="1" height="22" fill="#232323"/><rect x="229" y="986.7" width="1" height="22" fill="#181818"/><rect x="259" y="986.7" width="1" height="22" fill="#232323"/><rect x="288" y="986.7" width="1" height="22" fill="#181818"/><rect x="318" y="986.7" width="1" height="22" fill="#232323"/><rect x="347" y="986.7" width="1" height="22" fill="#181818"/><rect x="377" y="986.7" width="1" height="22" fill="#232323"/><rect x="406" y="986.7" width="1" height="22" fill="#181818"/><rect x="436" y="986.7" width="1" height="22" fill="#232323"/><rect x="465" y="986.7" width="1" height="22" fill="#181818"/><rect x="495" y="986.7" width="1" height="22" fill="#232323"/><rect x="524" y="986.7" width="1" height="22" fill="#181818"/><rect x="554" y="986.7" width="1" height="22" fill="#232323"/><rect x="583" y="986.7" width="1" height="22" fill="#181818"/><rect x="612" y="986.7" width="1" height="22" fill="#232323"/><rect x="642" y="986.7" width="1" height="22" fill="#181818"/><rect x="671" y="986.7" width="1" height="22" fill="#232323"/><rect x="701" y="986.7" width="1" height="22" fill="#181818"/><rect x="730" y="986.7" width="1" height="22" fill="#232323"/><rect x="760" y="986.7" width="1" height="22" fill="#181818"/><rect x="789" y="986.7" width="1" height="22" fill="#232323"/><rect x="819" y="986.7" width="1" height="22" fill="#181818"/><rect x="848" y="986.7" width="1" height="22" fill="#232323"/><rect x="878" y="986.7" width="1" height="22" fill="#181818"/><rect x="907" y="986.7" width="1" height="22" fill="#232323"/><rect x="937" y="986.7" width="1" height="22" fill="#181818"/><rect x="966" y="986.7" width="1" height="22" fill="#232323"/><rect x="996" y="986.7" width="1" height="22" fill="#181818"/><rect x="1025" y="986.7" width="1" height="22" fill="#232323"/><rect x="1055" y="986.7" width="1" height="22" fill="#181818"/><rect x="1084" y="986.7" width="1" height="22" fill="#232323"/><rect x="1113" y="986.7" width="1" height="22" fill="#181818"/><rect x="1143" y="986.7" width="1" height="22" fill="#232323"/><rect x="1172" y="986.7" width="1" height="22" fill="#181818"/><rect x="1202" y="986.7" width="1" height="22" fill="#232323"/><rect x="1231" y="986.7" width="1" height="22" fill="#181818"/><rect x="1261" y="986.7" width="1" height="22" fill="#232323"/><rect x="1290" y="986.7" width="1" height="22" fill="#181818"/><rect x="1320" y="986.7" width="1" height="22" fill="#232323"/><rect x="1349" y="986.7" width="1" height="22" fill="#181818"/><rect x="1379" y="986.7" width="1" height="22" fill="#232323"/><rect x="1408" y="986.7" width="1" height="22" fill="#181818"/><rect x="1438" y="986.7" width="1" height="22" fill="#232323"/><rect x="1467" y="986.7" width="1" height="22" fill="#181818"/><rect x="1497" y="986.7" width="1" height="22" fill="#232323"/><rect x="1526" y="986.7" width="1" height="22" fill="#181818"/><rect x="1555" y="986.7" width="1" height="22" fill="#232323"/><rect x="1526" y="986.7" width="1.5" height="22" fill="#000"/></svg>
<div style="left:10px;top:1002.8px;width:1567px;height:3.1px;background:rgba(255,255,255,0.065);border-radius:1.5px;"></div>
<div style="left:2px;top:986.7px;width:6px;height:22px;background:#1f1f1f;border-radius:0 0 0 6px;"></div>
<svg style="left:1px;top:990.5px;" width="7" height="10" viewBox="0 0 7 10"><path d="M2 1L5.5 5L2 9" fill="none" stroke="#888" stroke-width="1.1"/></svg>
<svg style="left:1578px;top:990.5px;" width="7" height="10" viewBox="0 0 7 10"><path d="M5 1L1.5 5L5 9" fill="none" stroke="#888" stroke-width="1.1"/></svg>
<span class="t" style="left:-187.85783132530122px;width:600px;text-align:center;top:971px;font-size:11.5px;line-height:11.5px;color:#cfcfcf;letter-spacing:0.2px;">10</span>
<span class="t" style="left:-128.92208835341367px;width:600px;text-align:center;top:971px;font-size:11.5px;line-height:11.5px;color:#cfcfcf;letter-spacing:0.2px;">20</span>
<span class="t" style="left:-69.98634538152612px;width:600px;text-align:center;top:971px;font-size:11.5px;line-height:11.5px;color:#cfcfcf;letter-spacing:0.2px;">30</span>
<span class="t" style="left:-11.050602409638566px;width:600px;text-align:center;top:971px;font-size:11.5px;line-height:11.5px;color:#cfcfcf;letter-spacing:0.2px;">40</span>
<span class="t" style="left:47.88514056224896px;width:600px;text-align:center;top:971px;font-size:11.5px;line-height:11.5px;color:#cfcfcf;letter-spacing:0.2px;">50</span>
<span class="t" style="left:106.82088353413653px;width:600px;text-align:center;top:971px;font-size:11.5px;line-height:11.5px;color:#cfcfcf;letter-spacing:0.2px;">60</span>
<span class="t" style="left:165.75662650602405px;width:600px;text-align:center;top:971px;font-size:11.5px;line-height:11.5px;color:#cfcfcf;letter-spacing:0.2px;">70</span>
<span class="t" style="left:224.69236947791168px;width:600px;text-align:center;top:971px;font-size:11.5px;line-height:11.5px;color:#cfcfcf;letter-spacing:0.2px;">80</span>
<span class="t" style="left:283.62811244979923px;width:600px;text-align:center;top:971px;font-size:11.5px;line-height:11.5px;color:#cfcfcf;letter-spacing:0.2px;">90</span>
<span class="t" style="left:342.56385542168675px;width:600px;text-align:center;top:971px;font-size:11.5px;line-height:11.5px;color:#cfcfcf;letter-spacing:0.2px;">100</span>
<span class="t" style="left:401.4995983935743px;width:600px;text-align:center;top:971px;font-size:11.5px;line-height:11.5px;color:#cfcfcf;letter-spacing:0.2px;">110</span>
<span class="t" style="left:460.4353413654618px;width:600px;text-align:center;top:971px;font-size:11.5px;line-height:11.5px;color:#cfcfcf;letter-spacing:0.2px;">120</span>
<span class="t" style="left:519.3710843373493px;width:600px;text-align:center;top:971px;font-size:11.5px;line-height:11.5px;color:#cfcfcf;letter-spacing:0.2px;">130</span>
<span class="t" style="left:578.306827309237px;width:600px;text-align:center;top:971px;font-size:11.5px;line-height:11.5px;color:#cfcfcf;letter-spacing:0.2px;">140</span>
<span class="t" style="left:637.2425702811245px;width:600px;text-align:center;top:971px;font-size:11.5px;line-height:11.5px;color:#cfcfcf;letter-spacing:0.2px;">150</span>
<span class="t" style="left:696.178313253012px;width:600px;text-align:center;top:971px;font-size:11.5px;line-height:11.5px;color:#cfcfcf;letter-spacing:0.2px;">160</span>
<span class="t" style="left:755.1140562248994px;width:600px;text-align:center;top:971px;font-size:11.5px;line-height:11.5px;color:#cfcfcf;letter-spacing:0.2px;">170</span>
<span class="t" style="left:814.0497991967871px;width:600px;text-align:center;top:971px;font-size:11.5px;line-height:11.5px;color:#cfcfcf;letter-spacing:0.2px;">180</span>
<span class="t" style="left:872.9855421686747px;width:600px;text-align:center;top:971px;font-size:11.5px;line-height:11.5px;color:#cfcfcf;letter-spacing:0.2px;">190</span>
<span class="t" style="left:931.9212851405622px;width:600px;text-align:center;top:971px;font-size:11.5px;line-height:11.5px;color:#cfcfcf;letter-spacing:0.2px;">200</span>
<span class="t" style="left:990.8570281124497px;width:600px;text-align:center;top:971px;font-size:11.5px;line-height:11.5px;color:#cfcfcf;letter-spacing:0.2px;">210</span>
<span class="t" style="left:1049.7927710843371px;width:600px;text-align:center;top:971px;font-size:11.5px;line-height:11.5px;color:#cfcfcf;letter-spacing:0.2px;">220</span>
<span class="t" style="left:1108.7285140562246px;width:600px;text-align:center;top:971px;font-size:11.5px;line-height:11.5px;color:#cfcfcf;letter-spacing:0.2px;">230</span>
<span class="t" style="left:1167.6642570281122px;width:600px;text-align:center;top:971px;font-size:11.5px;line-height:11.5px;color:#cfcfcf;letter-spacing:0.2px;">240</span>
<span class="t" style="left:1226.6px;width:600px;text-align:center;top:971px;font-size:11.5px;line-height:11.5px;color:#cfcfcf;letter-spacing:0.2px;">250</span>
<div style="left:46.6px;top:967px;width:24px;height:16.8px;background:#4772b3;border-radius:4.5px;"></div>
<span class="t" style="left:-241.3px;width:600px;text-align:center;top:971px;font-size:11.5px;line-height:11.5px;color:#ffffff;letter-spacing:0.2px;">1</span>
<div style="left:57.9px;top:983px;width:2.5px;height:26px;background:#4a7fd0;border-radius:0px;"></div>
<svg style="left:1854px;top:1013px;" width="16" height="16" viewBox="0 0 16 16"><circle cx="7" cy="8" r="6" fill="none" stroke="#999" stroke-width="1.1"/><ellipse cx="7" cy="8" rx="2.5" ry="6" fill="none" stroke="#999" stroke-width="1"/><path d="M1 8H13" stroke="#999" stroke-width="1"/><path d="M1 1L15 15" stroke="#999" stroke-width="1.3"/></svg>
<div style="left:1876px;top:1015px;width:1px;height:15px;background:#777;border-radius:0px;"></div>
<span class="t" style="left:1881.7px;top:1016px;font-size:11.5px;line-height:11.5px;color:#8a8a8a;letter-spacing:0.2px;">4.5.4</span>
<div style="left:1px;top:49px;width:1584px;height:886px;border-radius:7px;box-shadow:inset 0 0 0 1px rgba(255,255,255,0.07)"></div>
<div style="left:1588px;top:49px;width:332px;height:309px;border-radius:7px;box-shadow:inset 0 0 0 1px rgba(255,255,255,0.07)"></div>
<div style="left:1588px;top:361px;width:332px;height:648px;border-radius:7px;box-shadow:inset 0 0 0 1px rgba(255,255,255,0.07)"></div>
<div style="left:1px;top:938px;width:1584px;height:71px;border-radius:7px;box-shadow:inset 0 0 0 1px rgba(255,255,255,0.07)"></div>
</div></body></html>
